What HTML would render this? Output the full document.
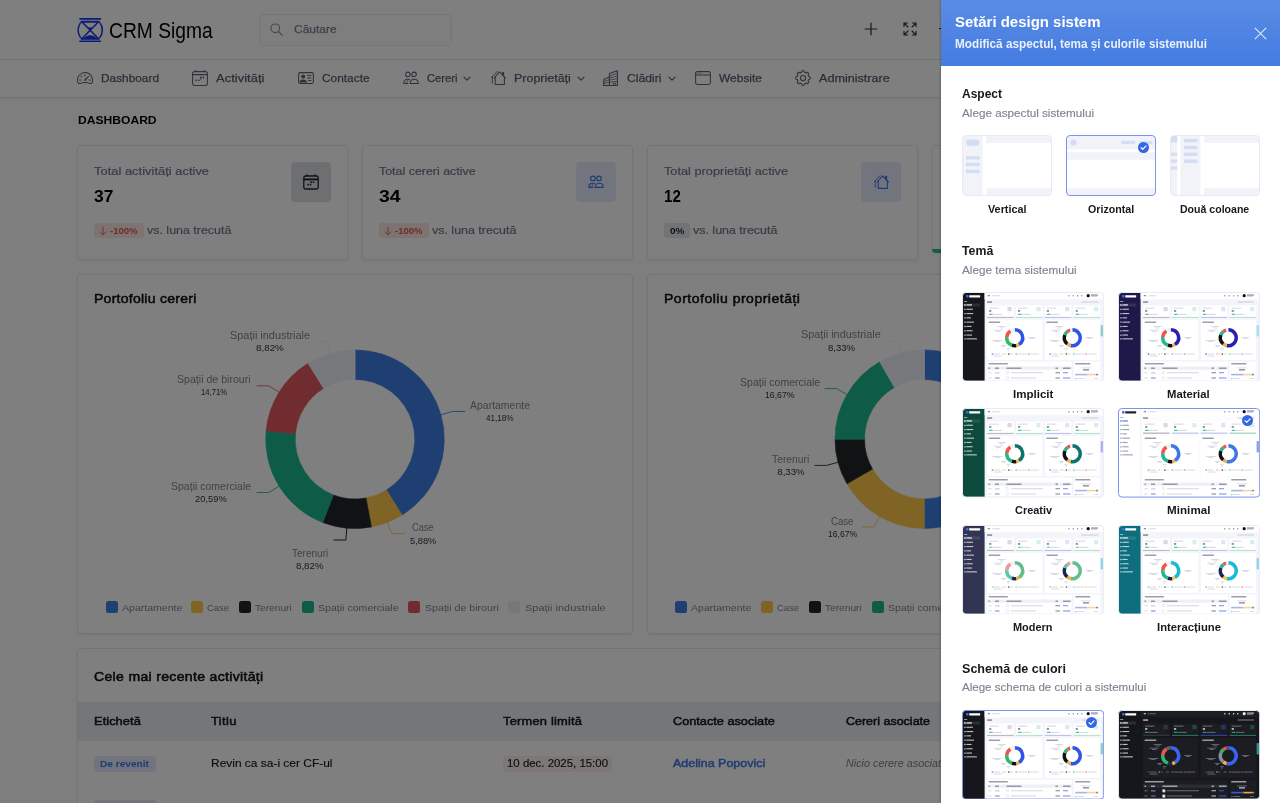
<!DOCTYPE html>
<html lang="ro"><head><meta charset="utf-8"><title>CRM Sigma - Dashboard</title><style>
*{box-sizing:border-box;margin:0;padding:0}
html,body{width:1280px;height:803px;overflow:hidden}
body{font-family:"Liberation Sans",sans-serif;background:#fdfdfe;position:relative}
.layer{position:absolute;left:0;top:0;width:1280px;height:803px;overflow:hidden;transform:translateZ(0);will-change:transform}
.t{position:absolute;white-space:nowrap;display:block}
.b{position:absolute;display:block}
#ov{background:rgba(0,0,0,.5)}
</style></head><body>
<div class="layer" id="pg">
<div class="b" style="left:0px;top:0px;width:1280px;height:59px;background:#fff;"></div>
<div class="b" style="left:0px;top:59px;width:1280px;height:1px;background:#e6e9ee;"></div>
<div class="b" style="left:0px;top:60px;width:1280px;height:37px;background:#fff;box-shadow:0 1px 2px rgba(56,65,74,.18);"></div>
<svg class="b" style="left:77px;top:17.2px;" width="26.4" height="26.4" viewBox="0 0 26.4 26.4"><g fill="none" stroke="#1a36ea" stroke-width="1.6" stroke-linecap="round"><path d="M2.9 1.85H23.5M2.900 24.250H23.500"/><path d="M3.4 5.9A12.2 12.2 0 0 0 3.400 20.200M23 5.900A12.200 12.200 0 0 1 23 20.200" stroke-width="1.500"/><path d="M4.6 4.7H21.8M4.600 21.700H21.800" stroke-width="2"/><path d="M4.800 4.700L21.600 21.700M21.600 4.700L4.800 21.700" stroke-width="1.600"/></g><path d="M6.8 21.600C8.500 19.200 10.800 18.300 13.200 18.300S17.900 19.200 19.600 21.600Z" fill="#1a36ea"/><path d="M11 10.400H15.400L13.200 12.800Z" fill="#1a36ea"/></svg>
<span class="t" style="left:108.8px;top:18.1px;font-size:22.6px;line-height:26px;color:#000;transform:scaleX(.852);transform-origin:0 0;">CRM Sigma</span>
<div class="b" style="left:259px;top:13.5px;width:192.5px;height:32px;background:#fdfdfe;border:1px solid #ebedf2;border-radius:4px;"></div>
<svg class="b" style="left:269.5px;top:23.3px;" width="13" height="13" viewBox="0 0 13 13"><g fill="none" stroke="#8a8fa0" stroke-width="1.1"><circle cx="5.3" cy="5.3" r="4.3"/><path d="M8.5 8.5L12.3 12.3" stroke-linecap="round"/></g></svg>
<span id="t1" class="t" style="left:294.20px;top:24.31px;font-size:11.8px;line-height:11.8px;color:#7c8090;-webkit-text-stroke:0.25px #7c8090;transform:scaleX(1.0147);transform-origin:0 0;">Căutare</span>
<svg class="b" style="left:864px;top:21.6px;" width="14" height="14" viewBox="0 0 14 14"><path d="M7 .8V13.2M.8 7H13.2" stroke="#2b2f38" stroke-width="1.2" fill="none"/></svg>
<svg class="b" style="left:902.7px;top:21.9px;" width="14" height="14" viewBox="0 0 14 14"><g fill="none" stroke="#2b2f38" stroke-width="1.1" stroke-linecap="round" stroke-linejoin="round"><path d="M1 4.6V1H4.6M1 1L5 5M9.4 1H13V4.6M13 1L9 5M13 9.4V13H9.4M13 13L9 9M4.6 13H1V9.4M1 13L5 9"/></g></svg>
<div class="b" style="left:938.6px;top:27.8px;width:3px;height:1.2px;background:#2b2f38;"></div>
<svg class="b" style="left:76.6px;top:70.4px;" width="16" height="16" viewBox="0 0 16 16"><g fill="#5e6477"><path d="M8 4a.5.5 0 0 1 .5.5V6a.5.5 0 0 1-1 0V4.500A.5.5 0 0 1 8 4zM3.732 5.732a.5.5 0 0 1 .707 0l.915.914a.5.5 0 1 1-.708.708l-.914-.915a.5.5 0 0 1 0-.707zM2 10a.5.5 0 0 1 .5-.5h1.586a.5.5 0 0 1 0 1H2.5A.5.5 0 0 1 2 10zm9.500 0a.5.5 0 0 1 .5-.5h1.500a.5.5 0 0 1 0 1H12a.5.5 0 0 1-.5-.5zm.754-4.246a.389.389 0 0 0-.527-.02L7.547 9.310a.91.91 0 1 0 1.302 1.258l3.434-4.297a.389.389 0 0 0-.029-.518z"/><path fill-rule="evenodd" d="M0 10a8 8 0 1 1 15.547 2.661c-.442 1.253-1.845 1.602-2.932 1.250C11.309 13.488 9.475 13 8 13c-1.474 0-3.310.488-4.615.911-1.087.352-2.490.003-2.932-1.250A7.988 7.988 0 0 1 0 10zm8-7a7 7 0 0 0-6.603 9.329c.203.575.923.876 1.680.630C4.397 12.533 6.358 12 8 12s3.604.532 4.923.960c.757.245 1.477-.056 1.680-.631A7 7 0 0 0 8 3z"/></g></svg>
<span id="t2" class="t" style="left:101.20px;top:72.83px;font-size:11.3px;line-height:11.3px;color:#565c6e;-webkit-text-stroke:0.25px #565c6e;transform:scaleX(1.0495);transform-origin:0 0;">Dashboard</span>
<svg class="b" style="left:191.8px;top:70.2px;" width="16" height="16" viewBox="0 0 16 16"><g fill="none" stroke="#5e6477" stroke-width="1.05" stroke-linecap="round" stroke-linejoin="round"><rect x=".6" y="1.6" width="14.8" height="13.8" rx="2"/><path d="M.6 4.6H15.4M3.6 .5V1.6M12.4 .5V1.6" /></g><g fill="#5e6477"><rect x="10.6" y="6.6" width="1.6" height="1.6" rx=".5"/><rect x="8" y="6.6" width="1.6" height="1.6" rx=".5"/><rect x="3.4" y="9.4" width="1.6" height="1.6" rx=".5"/><rect x="6" y="9.4" width="1.6" height="1.6" rx=".5"/><rect x="8.2" y="8.2" width="1.4" height="1.4" rx=".4"/></g></svg>
<span id="t3" class="t" style="left:216.20px;top:72.83px;font-size:11.3px;line-height:11.3px;color:#565c6e;-webkit-text-stroke:0.25px #565c6e;letter-spacing:0.044px;transform:scaleX(1.1400);transform-origin:0 0;">Activități</span>
<svg class="b" style="left:297.6px;top:70.4px;" width="16" height="16" viewBox="0 0 16 16"><g fill="none" stroke="#5e6477" stroke-width="1.05" stroke-linecap="round" stroke-linejoin="round"><rect x=".6" y="2.6" width="14.8" height="10.8" rx="1.6"/><path d="M9.5 5.5H13M9.5 8H13M10.5 10.5H13"/></g><g fill="#5e6477"><circle cx="5.2" cy="6.6" r="2"/><path d="M1.4 12.6C1.6 10.4 3 9.4 5.2 9.4S8.800 10.400 9 12.600Z"/></g></svg>
<span id="t4" class="t" style="left:321.80px;top:72.83px;font-size:11.3px;line-height:11.3px;color:#565c6e;-webkit-text-stroke:0.25px #565c6e;transform:scaleX(1.0527);transform-origin:0 0;">Contacte</span>
<svg class="b" style="left:402.6px;top:70.2px;" width="16" height="16" viewBox="0 0 16 16"><g fill="none" stroke="#5e6477" stroke-width="1.05" stroke-linecap="round" stroke-linejoin="round"><circle cx="4.9" cy="4.400" r="2.300"/><circle cx="11" cy="4.400" r="2.300"/><path d="M7.2 13.400C7.200 10.600 8.800 9.200 11.200 9.200S15.300 10.600 15.300 13.400Z"/><path d="M6.700 9.700C6.200 9.400 5.600 9.200 4.900 9.200C2.400 9.200 .8 10.600 .8 13.400H5"/><path d="M4.600 10.600L3.400 13.200" stroke-width=".8"/></g></svg>
<span id="t5" class="t" style="left:426.60px;top:72.83px;font-size:11.3px;line-height:11.3px;color:#565c6e;-webkit-text-stroke:0.25px #565c6e;transform:scaleX(0.9881);transform-origin:0 0;">Cereri</span>
<svg class="b" style="left:463.4px;top:75.6px;" width="8" height="6" viewBox="0 0 8 6"><path d="M1 1.200L4 4.200L7 1.200" fill="none" stroke="#5e6477" stroke-width="1.200" stroke-linecap="round" stroke-linejoin="round"/></svg>
<svg class="b" style="left:490px;top:70px;" width="16" height="16" viewBox="0 0 16 16"><g fill="none" stroke="#5e6477" stroke-width="1.05" stroke-linecap="round" stroke-linejoin="round"><path d="M4.200 8L9.400 1.800L15.400 8"/><path d="M5.200 7V14.400H14.400V7"/><path d="M12.400 4.800V2.400H13.600V6.200"/><path d="M7 1.600L1.400 7.800M2.300 6.900V13.400" stroke-width=".9"/></g></svg>
<span id="t6" class="t" style="left:514.00px;top:72.83px;font-size:11.3px;line-height:11.3px;color:#565c6e;-webkit-text-stroke:0.25px #565c6e;transform:scaleX(1.1029);transform-origin:0 0;">Proprietăți</span>
<svg class="b" style="left:576.6px;top:75.6px;" width="8" height="6" viewBox="0 0 8 6"><path d="M1 1.200L4 4.200L7 1.200" fill="none" stroke="#5e6477" stroke-width="1.200" stroke-linecap="round" stroke-linejoin="round"/></svg>
<svg class="b" style="left:603px;top:70px;" width="16" height="16" viewBox="0 0 16 16"><g fill="none" stroke="#5e6477" stroke-width="1.05" stroke-linecap="round" stroke-linejoin="round"><path d="M6.400 15.400V3.600L14.400 .8V15.400"/><path d="M.8 15.400V9.400L6.400 7"/><path d="M.8 15.400H14.400"/><path d="M6.400 5.800L14.400 3.400M6.400 8L14.400 6M6.400 10.200L14.400 8.600M6.400 12.400L14.400 11.200M.8 11.600L6.400 9.600M.8 13.600L6.400 12M10.400 15.400V13H12.400V15.400" stroke-width=".8"/></g></svg>
<span id="t7" class="t" style="left:627.40px;top:72.83px;font-size:11.3px;line-height:11.3px;color:#565c6e;-webkit-text-stroke:0.25px #565c6e;transform:scaleX(1.0745);transform-origin:0 0;">Clădiri</span>
<svg class="b" style="left:668.2px;top:75.6px;" width="8" height="6" viewBox="0 0 8 6"><path d="M1 1.200L4 4.200L7 1.200" fill="none" stroke="#5e6477" stroke-width="1.200" stroke-linecap="round" stroke-linejoin="round"/></svg>
<svg class="b" style="left:695px;top:70.2px;" width="16" height="16" viewBox="0 0 16 16"><g fill="none" stroke="#5e6477" stroke-width="1.05" stroke-linecap="round" stroke-linejoin="round"><rect x=".6" y="1.600" width="14.800" height="12.800" rx="1.800"/><path d="M.6 5H15.400"/></g><g fill="#5e6477"><circle cx="2.700" cy="3.300" r=".5"/><circle cx="4.300" cy="3.300" r=".5"/><circle cx="5.900" cy="3.300" r=".5"/></g></svg>
<span id="t8" class="t" style="left:719.00px;top:72.83px;font-size:11.3px;line-height:11.3px;color:#565c6e;-webkit-text-stroke:0.25px #565c6e;transform:scaleX(1.0589);transform-origin:0 0;">Website</span>
<svg class="b" style="left:794.6px;top:70.2px;" width="16" height="16" viewBox="0 0 16 16"><g fill="none" stroke="#5e6477" stroke-width="1.05" stroke-linecap="round" stroke-linejoin="round"><path d="M6.91 0.78L9.09 0.78L9.43 2.28L11.03 2.94L12.33 2.12L13.88 3.67L13.06 4.96L13.72 6.57L15.22 6.91L15.22 9.09L13.72 9.43L13.06 11.03L13.88 12.33L12.33 13.88L11.04 13.06L9.43 13.72L9.09 15.22L6.91 15.22L6.57 13.72L4.97 13.06L3.67 13.88L2.12 12.33L2.94 11.04L2.28 9.43L0.78 9.09L0.78 6.91L2.28 6.57L2.94 4.97L2.12 3.67L3.67 2.12L4.96 2.94L6.57 2.28Z"/><circle cx="8" cy="8" r="2.600"/></g></svg>
<span id="t9" class="t" style="left:818.60px;top:72.83px;font-size:11.3px;line-height:11.3px;color:#565c6e;-webkit-text-stroke:0.25px #565c6e;transform:scaleX(1.1148);transform-origin:0 0;">Administrare</span>
<span id="t10" class="t" style="left:77.70px;top:113.58px;font-size:11.6px;line-height:11.6px;color:#000;font-weight:700;transform:scaleX(1.0430);transform-origin:0 0;">DASHBOARD</span>
<div class="b" style="left:77px;top:145px;width:271px;height:115px;background:#fff;border:1px solid #e6e9ee;border-radius:4px;box-shadow:0 1px 2px rgba(56,65,74,.10);"></div>
<span id="t11" class="t" style="left:94.30px;top:165.63px;font-size:11.3px;line-height:11.3px;color:#71758a;-webkit-text-stroke:0.2px #71758a;letter-spacing:0.019px;transform:scaleX(1.1400);transform-origin:0 0;">Total activități active</span>
<span id="t12" class="t" style="left:94.30px;top:189.49px;font-size:15.6px;line-height:15.6px;color:#000;font-weight:700;transform:scaleX(1.1176);transform-origin:0 0;">37</span>
<div class="b" style="left:290.8px;top:162px;width:40px;height:40px;background:#dcdee2;border-radius:4px;"></div>
<svg class="b" style="left:302.8px;top:174px;" width="16" height="16" viewBox="0 0 16 16"><g fill="none" stroke="#212529" stroke-width="1.300"><rect x=".8" y="2" width="14.400" height="13" rx="1.800"/><path d="M.8 5.400H15.200" stroke-width="1.900"/><path d="M4 .4V2M12 .4V2" stroke-width="1.500"/></g><g fill="#212529"><rect x="9.800" y="7.400" width="1.600" height="1.600"/><rect x="7.400" y="7.400" width="1.600" height="1.600"/><rect x="4.400" y="9.800" width="1.600" height="1.600"/><rect x="6.800" y="9.800" width="1.600" height="1.600"/></g></svg>
<div class="b" style="left:94.3px;top:223.2px;width:50px;height:15.3px;background:#fbe6e3;border-radius:3px;"></div>
<svg class="b" style="left:99.1px;top:225.8px;" width="8" height="10" viewBox="0 0 8 10"><path d="M4 1V8.600M1.200 6L4 8.800L6.800 6" fill="none" stroke="#e2574c" stroke-width=".85" stroke-linecap="round" stroke-linejoin="round"/></svg>
<span id="t13" class="t" style="left:110.40px;top:226.17px;font-size:9.6px;line-height:9.6px;color:#e2574c;font-weight:700;transform:scaleX(0.9952);transform-origin:0 0;">-100%</span>
<span id="t14" class="t" style="left:146.60px;top:225.33px;font-size:11.3px;line-height:11.3px;color:#71758a;-webkit-text-stroke:0.2px #71758a;transform:scaleX(1.1017);transform-origin:0 0;">vs. luna trecută</span>
<div class="b" style="left:362px;top:145px;width:271px;height:115px;background:#fff;border:1px solid #e6e9ee;border-radius:4px;box-shadow:0 1px 2px rgba(56,65,74,.10);"></div>
<span id="t15" class="t" style="left:379.30px;top:165.63px;font-size:11.3px;line-height:11.3px;color:#71758a;-webkit-text-stroke:0.2px #71758a;transform:scaleX(1.0989);transform-origin:0 0;">Total cereri active</span>
<span id="t16" class="t" style="left:379.30px;top:189.49px;font-size:15.6px;line-height:15.6px;color:#000;font-weight:700;transform:scaleX(1.2443);transform-origin:0 0;">34</span>
<div class="b" style="left:575.8px;top:162px;width:40px;height:40px;background:#e5ebfb;border-radius:4px;"></div>
<svg class="b" style="left:587.8px;top:174px;" width="16" height="16" viewBox="0 0 16 16"><g fill="none" stroke="#3d78e3" stroke-width="1.100" stroke-linecap="round" stroke-linejoin="round"><circle cx="4.9" cy="4.400" r="2.300"/><circle cx="11" cy="4.400" r="2.300"/><path d="M7.2 13.400C7.200 10.600 8.800 9.200 11.200 9.200S15.300 10.600 15.300 13.400Z"/><path d="M6.700 9.700C6.200 9.400 5.600 9.200 4.900 9.200C2.400 9.200 .8 10.600 .8 13.400H5"/><path d="M4.600 10.600L3.400 13.200" stroke-width=".8"/></g></svg>
<div class="b" style="left:379.3px;top:223.2px;width:50px;height:15.3px;background:#fbe6e3;border-radius:3px;"></div>
<svg class="b" style="left:384.1px;top:225.8px;" width="8" height="10" viewBox="0 0 8 10"><path d="M4 1V8.600M1.200 6L4 8.800L6.800 6" fill="none" stroke="#e2574c" stroke-width=".85" stroke-linecap="round" stroke-linejoin="round"/></svg>
<span id="t17" class="t" style="left:395.40px;top:226.17px;font-size:9.6px;line-height:9.6px;color:#e2574c;font-weight:700;transform:scaleX(0.9952);transform-origin:0 0;">-100%</span>
<span id="t18" class="t" style="left:431.60px;top:225.33px;font-size:11.3px;line-height:11.3px;color:#71758a;-webkit-text-stroke:0.2px #71758a;transform:scaleX(1.1017);transform-origin:0 0;">vs. luna trecută</span>
<div class="b" style="left:647px;top:145px;width:271px;height:115px;background:#fff;border:1px solid #e6e9ee;border-radius:4px;box-shadow:0 1px 2px rgba(56,65,74,.10);"></div>
<span id="t19" class="t" style="left:664.30px;top:165.63px;font-size:11.3px;line-height:11.3px;color:#71758a;-webkit-text-stroke:0.2px #71758a;transform:scaleX(1.1284);transform-origin:0 0;">Total proprietăți active</span>
<span id="t20" class="t" style="left:664.30px;top:189.49px;font-size:15.6px;line-height:15.6px;color:#000;font-weight:700;transform:scaleX(0.9678);transform-origin:0 0;">12</span>
<div class="b" style="left:860.8px;top:162px;width:40px;height:40px;background:#e5ebfb;border-radius:4px;"></div>
<svg class="b" style="left:872.8px;top:174px;" width="16" height="16" viewBox="0 0 16 16"><g fill="none" stroke="#3d78e3" stroke-width="1.100" stroke-linecap="round" stroke-linejoin="round"><path d="M4.200 8L9.400 1.800L15.400 8"/><path d="M5.200 7V14.400H14.400V7"/><path d="M12.400 4.800V2.400H13.600V6.200"/><path d="M7 1.600L1.400 7.800M2.300 6.900V13.400" stroke-width=".9"/></g></svg>
<div class="b" style="left:664.3px;top:223.2px;width:25.6px;height:15.3px;background:#e4e6ea;border-radius:3px;"></div>
<span id="t21" class="t" style="left:669.80px;top:226.17px;font-size:9.6px;line-height:9.6px;color:#212529;font-weight:700;transform:scaleX(1.0378);transform-origin:0 0;">0%</span>
<span id="t22" class="t" style="left:693.00px;top:225.33px;font-size:11.3px;line-height:11.3px;color:#71758a;-webkit-text-stroke:0.2px #71758a;transform:scaleX(1.1017);transform-origin:0 0;">vs. luna trecută</span>
<div class="b" style="left:932px;top:145px;width:271px;height:108px;background:#fff;border:1px solid #e6e9ee;border-radius:4px;box-shadow:0 1px 2px rgba(56,65,74,.10);"></div>
<div class="b" style="left:932px;top:249.4px;width:271px;height:3.6px;background:#21bd93;border-radius:0 0 4px 4px;"></div>
<div class="b" style="left:77px;top:274px;width:556px;height:359.5px;background:#fff;border:1px solid #e6e9ee;border-radius:4px;box-shadow:0 1px 2px rgba(56,65,74,.10);"></div>
<span id="t23" class="t" style="left:94.30px;top:292.99px;font-size:12.3px;line-height:12.3px;color:#111;-webkit-text-stroke:0.5px #111;letter-spacing:0.226px;transform:scaleX(1.1400);transform-origin:0 0;">Portofoliu cereri</span>
<svg class="b" style="left:0;top:0" width="1280" height="803" viewBox="0 0 1280 803"><path d="M440.89 414.76L452.43 411.48H465.40" fill="none" stroke="#3f7de2" stroke-width="1" stroke-opacity=".85"/><path d="M387.26 522.47L391.59 533.66H405.00" fill="none" stroke="#ffc84b" stroke-width="1" stroke-opacity=".85"/><path d="M279.08 486.21L268.87 492.53H256.60" fill="none" stroke="#1cb88f" stroke-width="1" stroke-opacity=".85"/><path d="M279.08 392.19L268.87 385.87H256.60" fill="none" stroke="#e0595e" stroke-width="1" stroke-opacity=".85"/><path d="M330.56 353.31L327.28 341.77H315.00" fill="none" stroke="#eef1f6" stroke-width="1" stroke-opacity=".85"/><path d="M355.00 349.90A89.3 89.3 0 0 1 402.01 515.12L386.48 490.04A59.8 59.8 0 0 0 355.00 379.40Z" fill="#3f7de2" stroke="#3f7de2" stroke-width=".6"/><path d="M402.01 515.12A89.3 89.3 0 0 1 371.41 526.98L365.99 497.98A59.8 59.8 0 0 0 386.48 490.04Z" fill="#ffc84b" stroke="#ffc84b" stroke-width=".6"/><path d="M371.41 526.98A89.3 89.3 0 0 1 322.74 522.47L333.40 494.96A59.8 59.8 0 0 0 365.99 497.98Z" fill="#212529" stroke="#212529" stroke-width=".6"/><path d="M322.74 522.47A89.3 89.3 0 0 1 266.08 430.96L295.46 433.68A59.8 59.8 0 0 0 333.40 494.96Z" fill="#1cb88f" stroke="#1cb88f" stroke-width=".6"/><path d="M266.08 430.96A89.3 89.3 0 0 1 307.99 363.28L323.52 388.36A59.8 59.8 0 0 0 295.46 433.68Z" fill="#e0595e" stroke="#e0595e" stroke-width=".6"/><path d="M307.99 363.28A89.3 89.3 0 0 1 355.00 349.90L355.00 379.40A59.8 59.8 0 0 0 323.52 388.36Z" fill="#eef1f6" stroke="#eef1f6" stroke-width=".6"/><path d="M354.70 349.40V379.90" stroke="#fff" stroke-width="1"/></svg>
<span id="t24" class="t" style="left:229.90px;top:330.64px;font-size:10px;line-height:10px;color:#80848f;transform:scaleX(1.0917);transform-origin:0 0;">Spații industriale</span>
<span id="t25" class="t" style="left:256.00px;top:343.17px;font-size:9.6px;line-height:9.6px;color:#30343c;transform:scaleX(1.0219);transform-origin:0 0;">8,82%</span>
<span id="t26" class="t" style="left:177.40px;top:374.84px;font-size:10px;line-height:10px;color:#80848f;transform:scaleX(1.0592);transform-origin:0 0;">Spații de birouri</span>
<span id="t27" class="t" style="left:200.90px;top:387.27px;font-size:9.6px;line-height:9.6px;color:#30343c;transform:scaleX(0.8019);transform-origin:0 0;">14,71%</span>
<span id="t28" class="t" style="left:470.00px;top:400.64px;font-size:10px;line-height:10px;color:#80848f;transform:scaleX(1.0477);transform-origin:0 0;">Apartamente</span>
<span id="t29" class="t" style="left:485.70px;top:412.77px;font-size:9.6px;line-height:9.6px;color:#30343c;transform:scaleX(0.8480);transform-origin:0 0;">41,18%</span>
<span id="t30" class="t" style="left:170.90px;top:481.64px;font-size:10px;line-height:10px;color:#80848f;transform:scaleX(1.0518);transform-origin:0 0;">Spații comerciale</span>
<span id="t31" class="t" style="left:195.30px;top:494.27px;font-size:9.6px;line-height:9.6px;color:#30343c;transform:scaleX(0.9740);transform-origin:0 0;">20,59%</span>
<span id="t32" class="t" style="left:411.50px;top:523.24px;font-size:10px;line-height:10px;color:#80848f;transform:scaleX(0.9204);transform-origin:0 0;">Case</span>
<span id="t33" class="t" style="left:409.60px;top:535.77px;font-size:9.6px;line-height:9.6px;color:#30343c;transform:scaleX(0.9705);transform-origin:0 0;">5,88%</span>
<span id="t34" class="t" style="left:291.70px;top:548.63px;font-size:10px;line-height:10px;color:#80848f;transform:scaleX(1.0044);transform-origin:0 0;">Terenuri</span>
<span id="t35" class="t" style="left:296.00px;top:561.17px;font-size:9.6px;line-height:9.6px;color:#30343c;transform:scaleX(1.0109);transform-origin:0 0;">8,82%</span>
<div class="b" style="left:105.5px;top:600.8px;width:12px;height:12px;background:#3f7de2;border-radius:2.5px;"></div>
<span id="t36" class="t" style="left:121.60px;top:602.70px;font-size:9.8px;line-height:9.8px;color:#80848f;transform:scaleX(1.0768);transform-origin:0 0;">Apartamente</span>
<div class="b" style="left:190.7px;top:600.8px;width:12px;height:12px;background:#ffc84b;border-radius:2.5px;"></div>
<span id="t37" class="t" style="left:207.30px;top:602.70px;font-size:9.8px;line-height:9.8px;color:#80848f;transform:scaleX(0.9661);transform-origin:0 0;">Case</span>
<div class="b" style="left:238.7px;top:600.8px;width:12px;height:12px;background:#212529;border-radius:2.5px;"></div>
<span id="t38" class="t" style="left:255.30px;top:602.70px;font-size:9.8px;line-height:9.8px;color:#80848f;transform:scaleX(1.0365);transform-origin:0 0;">Terenuri</span>
<div class="b" style="left:301.8px;top:600.8px;width:12px;height:12px;background:#1cb88f;border-radius:2.5px;"></div>
<span id="t39" class="t" style="left:318.40px;top:602.70px;font-size:9.8px;line-height:9.8px;color:#80848f;transform:scaleX(1.0803);transform-origin:0 0;">Spații comerciale</span>
<div class="b" style="left:407.8px;top:600.8px;width:12px;height:12px;background:#e0595e;border-radius:2.5px;"></div>
<span id="t40" class="t" style="left:424.80px;top:602.70px;font-size:9.8px;line-height:9.8px;color:#80848f;transform:scaleX(1.0840);transform-origin:0 0;">Spații de birouri</span>
<div class="b" style="left:507.8px;top:600.8px;width:12px;height:12px;background:#eef1f6;border-radius:2.5px;"></div>
<span id="t41" class="t" style="left:524.80px;top:602.70px;font-size:9.8px;line-height:9.8px;color:#80848f;transform:scaleX(1.1225);transform-origin:0 0;">Spații industriale</span>
<svg class="b" style="left:0;top:0" width="1280" height="803"><path d="M346.9 526.6L345.9 540H333.6" fill="none" stroke="#212529" stroke-width="1"/></svg>
<div class="b" style="left:647px;top:274px;width:556px;height:359.5px;background:#fff;border:1px solid #e6e9ee;border-radius:4px;box-shadow:0 1px 2px rgba(56,65,74,.10);"></div>
<span id="t42" class="t" style="left:664.30px;top:292.99px;font-size:12.3px;line-height:12.3px;color:#111;-webkit-text-stroke:0.5px #111;letter-spacing:0.440px;transform:scaleX(1.1400);transform-origin:0 0;">Portofoliu proprietăți</span>
<svg class="b" style="left:0;top:0" width="1280" height="803" viewBox="0 0 1280 803"><path d="M1013.60 439.20L1025.60 439.20H1040.00" fill="none" stroke="#3f7de2" stroke-width="1" stroke-opacity=".85"/><path d="M879.65 516.54L873.65 526.93H861.60" fill="none" stroke="#ffc84b" stroke-width="1" stroke-opacity=".85"/><path d="M838.04 462.31L826.45 465.42H814.60" fill="none" stroke="#212529" stroke-width="1" stroke-opacity=".85"/><path d="M846.96 394.55L836.57 388.55H824.70" fill="none" stroke="#1cb88f" stroke-width="1" stroke-opacity=".85"/><path d="M901.19 352.94L898.08 341.35H886.00" fill="none" stroke="#eef1f6" stroke-width="1" stroke-opacity=".85"/><path d="M924.30 349.90A89.3 89.3 0 0 1 924.30 528.50L924.30 499.00A59.8 59.8 0 0 0 924.30 379.40Z" fill="#3f7de2" stroke="#3f7de2" stroke-width=".6"/><path d="M924.30 528.50A89.3 89.3 0 0 1 846.96 483.85L872.51 469.10A59.8 59.8 0 0 0 924.30 499.00Z" fill="#ffc84b" stroke="#ffc84b" stroke-width=".6"/><path d="M846.96 483.85A89.3 89.3 0 0 1 835.00 439.20L864.50 439.20A59.8 59.8 0 0 0 872.51 469.10Z" fill="#212529" stroke="#212529" stroke-width=".6"/><path d="M835.00 439.20A89.3 89.3 0 0 1 879.65 361.86L894.40 387.41A59.8 59.8 0 0 0 864.50 439.20Z" fill="#1cb88f" stroke="#1cb88f" stroke-width=".6"/><path d="M879.65 361.86A89.3 89.3 0 0 1 924.30 349.90L924.30 379.40A59.8 59.8 0 0 0 894.40 387.41Z" fill="#eef1f6" stroke="#eef1f6" stroke-width=".6"/><path d="M924.00 349.40V379.90" stroke="#fff" stroke-width="1"/></svg>
<span id="t43" class="t" style="left:801.30px;top:330.14px;font-size:10px;line-height:10px;color:#80848f;transform:scaleX(1.0862);transform-origin:0 0;">Spații industriale</span>
<span id="t44" class="t" style="left:827.60px;top:342.67px;font-size:9.6px;line-height:9.6px;color:#30343c;transform:scaleX(0.9962);transform-origin:0 0;">8,33%</span>
<span id="t45" class="t" style="left:739.50px;top:377.64px;font-size:10px;line-height:10px;color:#80848f;transform:scaleX(1.0531);transform-origin:0 0;">Spații comerciale</span>
<span id="t46" class="t" style="left:764.90px;top:390.17px;font-size:9.6px;line-height:9.6px;color:#30343c;transform:scaleX(0.9064);transform-origin:0 0;">16,67%</span>
<span id="t47" class="t" style="left:772.30px;top:454.64px;font-size:10px;line-height:10px;color:#80848f;transform:scaleX(1.0321);transform-origin:0 0;">Terenuri</span>
<span id="t48" class="t" style="left:777.30px;top:467.07px;font-size:9.6px;line-height:9.6px;color:#30343c;">8,33%</span>
<span id="t49" class="t" style="left:831.00px;top:516.84px;font-size:10px;line-height:10px;color:#80848f;transform:scaleX(0.9589);transform-origin:0 0;">Case</span>
<span id="t50" class="t" style="left:827.60px;top:528.87px;font-size:9.6px;line-height:9.6px;color:#30343c;transform:scaleX(0.8910);transform-origin:0 0;">16,67%</span>
<span id="t51" class="t" style="left:1040.00px;top:428.64px;font-size:10px;line-height:10px;color:#80848f;transform:scaleX(1.0477);transform-origin:0 0;">Apartamente</span>
<span id="t52" class="t" style="left:1055.00px;top:441.27px;font-size:9.6px;line-height:9.6px;color:#30343c;transform:scaleX(0.9217);transform-origin:0 0;">50,00%</span>
<div class="b" style="left:675.3px;top:600.8px;width:12px;height:12px;background:#3f7de2;border-radius:2.5px;"></div>
<span id="t53" class="t" style="left:691.40px;top:602.70px;font-size:9.8px;line-height:9.8px;color:#80848f;transform:scaleX(1.0768);transform-origin:0 0;">Apartamente</span>
<div class="b" style="left:760.5px;top:600.8px;width:12px;height:12px;background:#ffc84b;border-radius:2.5px;"></div>
<span id="t54" class="t" style="left:777.10px;top:602.70px;font-size:9.8px;line-height:9.8px;color:#80848f;transform:scaleX(0.9661);transform-origin:0 0;">Case</span>
<div class="b" style="left:808.5px;top:600.8px;width:12px;height:12px;background:#212529;border-radius:2.5px;"></div>
<span id="t55" class="t" style="left:825.10px;top:602.70px;font-size:9.8px;line-height:9.8px;color:#80848f;transform:scaleX(1.0365);transform-origin:0 0;">Terenuri</span>
<div class="b" style="left:871.6px;top:600.8px;width:12px;height:12px;background:#1cb88f;border-radius:2.5px;"></div>
<span id="t56" class="t" style="left:888.20px;top:602.70px;font-size:9.8px;line-height:9.8px;color:#80848f;transform:scaleX(1.0803);transform-origin:0 0;">Spații comerciale</span>
<div class="b" style="left:977.6px;top:600.8px;width:12px;height:12px;background:#e0595e;border-radius:2.5px;"></div>
<span id="t57" class="t" style="left:994.60px;top:602.70px;font-size:9.8px;line-height:9.8px;color:#80848f;transform:scaleX(1.0840);transform-origin:0 0;">Spații de birouri</span>
<div class="b" style="left:1077.6px;top:600.8px;width:12px;height:12px;background:#eef1f6;border-radius:2.5px;"></div>
<span id="t58" class="t" style="left:1094.60px;top:602.70px;font-size:9.8px;line-height:9.8px;color:#80848f;transform:scaleX(1.1225);transform-origin:0 0;">Spații industriale</span>
<div class="b" style="left:77px;top:648px;width:1126px;height:200px;background:#fff;border:1px solid #e6e9ee;border-radius:4px;box-shadow:0 1px 2px rgba(56,65,74,.10);"></div>
<span id="t59" class="t" style="left:93.80px;top:670.59px;font-size:12.3px;line-height:12.3px;color:#111;-webkit-text-stroke:0.5px #111;letter-spacing:0.293px;transform:scaleX(1.1400);transform-origin:0 0;">Cele mai recente activități</span>
<div class="b" style="left:78px;top:702px;width:1124px;height:39.3px;background:#e9ecf3;"></div>
<span id="t60" class="t" style="left:93.80px;top:716.03px;font-size:11.3px;line-height:11.3px;color:#16191d;-webkit-text-stroke:0.5px #16191d;letter-spacing:0.032px;transform:scaleX(1.1400);transform-origin:0 0;">Etichetă</span>
<span id="t61" class="t" style="left:210.50px;top:716.03px;font-size:11.3px;line-height:11.3px;color:#16191d;-webkit-text-stroke:0.5px #16191d;letter-spacing:0.358px;transform:scaleX(1.1400);transform-origin:0 0;">Titlu</span>
<span id="t62" class="t" style="left:503.00px;top:716.03px;font-size:11.3px;line-height:11.3px;color:#16191d;-webkit-text-stroke:0.5px #16191d;letter-spacing:0.177px;transform:scaleX(1.1400);transform-origin:0 0;">Termen limită</span>
<span id="t63" class="t" style="left:673.20px;top:716.03px;font-size:11.3px;line-height:11.3px;color:#16191d;-webkit-text-stroke:0.5px #16191d;transform:scaleX(1.1256);transform-origin:0 0;">Contacte asociate</span>
<span id="t64" class="t" style="left:845.50px;top:716.03px;font-size:11.3px;line-height:11.3px;color:#16191d;-webkit-text-stroke:0.5px #16191d;transform:scaleX(1.1055);transform-origin:0 0;">Cereri asociate</span>
<div class="b" style="left:93.8px;top:756px;width:62.4px;height:16px;background:#e2e9fb;border-radius:3px;"></div>
<span id="t65" class="t" style="left:100.40px;top:759.17px;font-size:9.6px;line-height:9.6px;color:#3d78e3;font-weight:700;transform:scaleX(1.0562);transform-origin:0 0;">De revenit</span>
<span id="t66" class="t" style="left:210.50px;top:758.43px;font-size:11.3px;line-height:11.3px;color:#16191d;-webkit-text-stroke:0.15px #16191d;transform:scaleX(1.0575);transform-origin:0 0;">Revin ca sa-i cer CF-ul</span>
<div class="b" style="left:503px;top:755.5px;width:108.5px;height:16.5px;background:#fbeeec;border-radius:3px;"></div>
<span id="t67" class="t" style="left:506.50px;top:758.43px;font-size:11.3px;line-height:11.3px;color:#16191d;-webkit-text-stroke:0.15px #16191d;transform:scaleX(1.0113);transform-origin:0 0;">10 dec. 2025, 15:00</span>
<span id="t68" class="t" style="left:673.20px;top:758.43px;font-size:11.3px;line-height:11.3px;color:#3d78e3;-webkit-text-stroke:0.45px #3d78e3;transform:scaleX(1.1038);transform-origin:0 0;">Adelina Popovici</span>
<span id="t69" class="t" style="left:845.50px;top:758.27px;font-size:11.5px;line-height:11.5px;color:#7d8190;font-style:italic;transform:scaleX(0.9405);transform-origin:0 0;">Nicio cerere asociată</span>
<div class="b" style="left:93.8px;top:800px;width:62.4px;height:16px;background:#e2e9fb;border-radius:3px;"></div>
</div>
<div class="layer" id="ov"></div>
<div class="layer" id="pn">
<div class="b" style="left:941px;top:0px;width:340px;height:803px;background:#fff;box-shadow:-1px 0 1.5px rgba(0,0,0,.2);"></div>
<div class="b" style="left:941px;top:0px;width:340px;height:65.7px;background:#3f79e0;background-image:linear-gradient(180deg,rgba(255,255,255,.14),rgba(255,255,255,.02));"></div>
<span id="t70" class="t" style="left:955.00px;top:14.38px;font-size:15.5px;line-height:15.5px;color:#fff;font-weight:700;transform:scaleX(0.9651);transform-origin:0 0;">Setări design sistem</span>
<span id="t71" class="t" style="left:955.00px;top:37.57px;font-size:12.2px;line-height:12.2px;color:#e9f0fd;font-weight:700;transform:scaleX(0.9639);transform-origin:0 0;">Modifică aspectul, tema și culorile sistemului</span>
<svg class="b" style="left:1254.3px;top:26.6px;" width="13" height="13" viewBox="0 0 13 13"><path d="M.8 .8L12.2 12.2M12.200 .8L.8 12.200" stroke="#fff" stroke-opacity=".82" stroke-width="1.1" fill="none"/></svg>
<span id="t72" class="t" style="left:962.00px;top:88.47px;font-size:12.2px;line-height:12.2px;color:#16191d;font-weight:700;transform:scaleX(0.9842);transform-origin:0 0;">Aspect</span>
<span id="t73" class="t" style="left:962.00px;top:107.95px;font-size:11.4px;line-height:11.4px;color:#7f8392;-webkit-text-stroke:0.15px #7f8392;transform:scaleX(1.0270);transform-origin:0 0;">Alege aspectul sistemului</span>
<span id="t74" class="t" style="left:962.00px;top:245.07px;font-size:12.2px;line-height:12.2px;color:#16191d;font-weight:700;transform:scaleX(1.0117);transform-origin:0 0;">Temă</span>
<span id="t75" class="t" style="left:962.00px;top:264.55px;font-size:11.4px;line-height:11.4px;color:#7f8392;-webkit-text-stroke:0.15px #7f8392;transform:scaleX(1.0275);transform-origin:0 0;">Alege tema sistemului</span>
<span id="t76" class="t" style="left:962.00px;top:662.77px;font-size:12.2px;line-height:12.2px;color:#16191d;font-weight:700;transform:scaleX(1.0305);transform-origin:0 0;">Schemă de culori</span>
<span id="t77" class="t" style="left:962.00px;top:682.25px;font-size:11.4px;line-height:11.4px;color:#7f8392;-webkit-text-stroke:0.15px #7f8392;transform:scaleX(1.0137);transform-origin:0 0;">Alege schema de culori a sistemului</span>
<svg class="b" style="left:962px;top:135px;" width="90" height="61" viewBox="0 0 90 61"><defs><clipPath id="lcv"><rect x=".5" y=".5" width="89" height="60" rx="3.500"/></clipPath></defs><g clip-path="url(#lcv)"><rect x="1.00" y="1.00" width="19.60" height="59.00" fill="#f1f3f9"/><rect x="4.00" y="4.50" width="13.40" height="6.20" fill="#d3ddf4" rx="3.1"/><rect x="4.00" y="21.20" width="13.60" height="3.30" fill="#d3ddf4"/><rect x="4.00" y="27.80" width="13.60" height="3.30" fill="#d3ddf4"/><rect x="4.00" y="34.70" width="13.60" height="3.30" fill="#d3ddf4"/><rect x="24.20" y="1.00" width="64.80" height="7.00" fill="#f1f3f9"/><rect x="24.20" y="53.20" width="64.80" height="6.80" fill="#f1f3f9"/></g><rect x=".5" y=".5" width="89" height="60" rx="3.500" fill="none" stroke="#e8ebf6"/></svg>
<svg class="b" style="left:1066px;top:135px;" width="90" height="61" viewBox="0 0 90 61"><defs><clipPath id="lch"><rect x=".5" y=".5" width="89" height="60" rx="3.500"/></clipPath></defs><g clip-path="url(#lch)"><rect x="1.00" y="1.00" width="88.00" height="13.40" fill="#f1f3f9"/><circle cx="7.4" cy="7.500" r="3.100" fill="#d3ddf4"/><rect x="55.50" y="5.80" width="13.60" height="3.10" fill="#d3ddf4"/><rect x="73.20" y="5.80" width="13.20" height="3.10" fill="#d3ddf4"/><rect x="1.00" y="17.30" width="88.00" height="7.40" fill="#f1f3f9"/><rect x="1.00" y="53.20" width="88.00" height="6.80" fill="#f1f3f9"/></g><rect x=".5" y=".5" width="89" height="60" rx="3.500" fill="none" stroke="#7d93ee"/></svg>
<svg class="b" style="left:1169.6px;top:135px;" width="90" height="61" viewBox="0 0 90 61"><defs><clipPath id="lcc"><rect x=".5" y=".5" width="89" height="60" rx="3.500"/></clipPath></defs><g clip-path="url(#lcc)"><rect x="1.00" y="1.00" width="6.20" height="59.00" fill="#f1f3f9"/><rect x="1.00" y="1.00" width="6.20" height="6.40" fill="#d3ddf4"/><rect x="1.00" y="17.60" width="6.20" height="3.30" fill="#d3ddf4"/><rect x="1.00" y="24.50" width="6.20" height="3.30" fill="#d3ddf4"/><rect x="1.00" y="31.40" width="6.20" height="3.30" fill="#d3ddf4"/><rect x="10.40" y="1.00" width="20.00" height="59.00" fill="#f1f3f9"/><rect x="14.00" y="3.90" width="13.50" height="3.40" fill="#d3ddf4"/><rect x="14.00" y="10.80" width="13.50" height="3.40" fill="#d3ddf4"/><rect x="14.00" y="17.60" width="13.50" height="3.40" fill="#d3ddf4"/><rect x="14.00" y="24.50" width="13.50" height="3.40" fill="#d3ddf4"/><rect x="33.80" y="1.00" width="55.20" height="7.00" fill="#f1f3f9"/><rect x="33.80" y="53.20" width="55.20" height="6.80" fill="#f1f3f9"/></g><rect x=".5" y=".5" width="89" height="60" rx="3.500" fill="none" stroke="#e8ebf6"/></svg>
<svg class="b" style="left:1137.7px;top:142px;" width="11" height="11" viewBox="0 0 12 12"><circle cx="6" cy="6" r="6" fill="#3266e3"/><path d="M3.300 6.200L5.200 8L8.800 4.300" fill="none" stroke="#fff" stroke-width="1.300" stroke-linecap="round" stroke-linejoin="round"/></svg>
<span id="t78" class="t" style="left:987.50px;top:204.87px;font-size:10.2px;line-height:10.2px;color:#16191d;font-weight:700;transform:scaleX(1.0621);transform-origin:0 0;">Vertical</span>
<span id="t79" class="t" style="left:1087.60px;top:204.87px;font-size:10.2px;line-height:10.2px;color:#16191d;font-weight:700;transform:scaleX(1.0463);transform-origin:0 0;">Orizontal</span>
<span id="t80" class="t" style="left:1180.10px;top:204.87px;font-size:10.2px;line-height:10.2px;color:#16191d;font-weight:700;transform:scaleX(1.0360);transform-origin:0 0;">Două coloane</span>
<svg class="b" style="left:962.2px;top:291.5px;" width="142.2" height="89.6" viewBox="0 0 142.2 89.6"><defs><clipPath id="tc1"><rect x=".5" y=".5" width="141.2" height="88.6" rx="3.500"/></clipPath></defs><g clip-path="url(#tc1)"><rect x="0.00" y="0.00" width="142.20" height="89.60" fill="#f4f5fa"/><rect x="0.00" y="0.00" width="22.60" height="89.60" fill="#15171c"/><rect x="4.20" y="3.00" width="2.20" height="2.60" fill="#3f6df0" rx="0.6"/><rect x="7.20" y="3.20" width="11.00" height="2.20" fill="#fff" rx="0.4"/><rect x="2.20" y="9.00" width="3.00" height="0.80" fill="rgba(255,255,255,.72)"/><rect x="2.20" y="12.35" width="1.50" height="1.30" fill="#fff" rx="0.3"/><rect x="4.40" y="12.40" width="5.50" height="1.10" fill="#fff"/><rect x="2.20" y="16.65" width="1.50" height="1.30" fill="rgba(255,255,255,.72)" rx="0.3"/><rect x="4.40" y="16.70" width="6.50" height="1.10" fill="rgba(255,255,255,.72)"/><rect x="2.20" y="20.95" width="1.50" height="1.30" fill="rgba(255,255,255,.72)" rx="0.3"/><rect x="4.40" y="21.00" width="6.80" height="1.10" fill="rgba(255,255,255,.72)"/><rect x="2.20" y="25.25" width="1.50" height="1.30" fill="rgba(255,255,255,.72)" rx="0.3"/><rect x="4.40" y="25.30" width="4.60" height="1.10" fill="rgba(255,255,255,.72)"/><rect x="2.20" y="29.55" width="1.50" height="1.30" fill="rgba(255,255,255,.72)" rx="0.3"/><rect x="4.40" y="29.60" width="7.60" height="1.10" fill="rgba(255,255,255,.72)"/><rect x="2.20" y="33.85" width="1.50" height="1.30" fill="rgba(255,255,255,.72)" rx="0.3"/><rect x="4.40" y="33.90" width="5.20" height="1.10" fill="rgba(255,255,255,.72)"/><rect x="2.20" y="38.15" width="1.50" height="1.30" fill="rgba(255,255,255,.72)" rx="0.3"/><rect x="4.40" y="38.20" width="6.20" height="1.10" fill="rgba(255,255,255,.72)"/><rect x="2.20" y="42.45" width="1.50" height="1.30" fill="rgba(255,255,255,.72)" rx="0.3"/><rect x="4.40" y="42.50" width="5.60" height="1.10" fill="rgba(255,255,255,.72)"/><rect x="2.20" y="46.25" width="1.50" height="1.30" fill="rgba(255,255,255,.72)" rx="0.3"/><rect x="4.40" y="46.30" width="10.50" height="1.10" fill="rgba(255,255,255,.72)"/><rect x="1.20" y="11.50" width="17.00" height="2.90" fill="rgba(255,255,255,.10)" rx="0.6"/><rect x="22.60" y="0.00" width="119.60" height="7.20" fill="#fff"/><rect x="25.80" y="3.30" width="2.20" height="0.90" fill="#5b6070"/><rect x="30.00" y="3.30" width="1.00" height="1.00" fill="#c9ccd6"/><rect x="31.80" y="3.40" width="6.00" height="0.80" fill="#c9ccd6"/><rect x="106.20" y="3.10" width="1.30" height="1.30" fill="#8b90a0" rx="0.4"/><rect x="110.60" y="3.10" width="1.30" height="1.30" fill="#8b90a0" rx="0.4"/><rect x="115.00" y="3.10" width="1.30" height="1.30" fill="#8b90a0" rx="0.4"/><rect x="119.20" y="3.10" width="1.30" height="1.30" fill="#8b90a0" rx="0.4"/><circle cx="126.2" cy="3.700" r="1.600" fill="#111"/><rect x="129.00" y="2.60" width="7.00" height="0.90" fill="#5b6070"/><rect x="129.00" y="4.20" width="6.00" height="0.80" fill="#c9ccd6"/><rect x="25.10" y="9.50" width="5.00" height="1.10" fill="#5b6070"/><rect x="119.60" y="9.50" width="16.50" height="1.00" fill="#c9ccd6"/><rect x="25.10" y="13.60" width="26.60" height="12.20" fill="#fff" rx="0.6"/><rect x="25.10" y="24.90" width="26.60" height="0.90" fill="#a9abb2"/><rect x="27.10" y="15.70" width="9.50" height="0.80" fill="#c9ccd6"/><rect x="27.10" y="18.30" width="2.20" height="1.30" fill="#5b6070"/><rect x="27.10" y="21.80" width="3.60" height="1.00" fill="#2dba6e"/><rect x="31.30" y="21.90" width="8.50" height="0.80" fill="#c9ccd6"/><rect x="45.50" y="15.00" width="4.20" height="4.20" fill="#d9dade" rx="0.5"/><rect x="54.00" y="13.60" width="26.60" height="12.20" fill="#fff" rx="0.6"/><rect x="54.00" y="24.90" width="26.60" height="0.90" fill="#a6dcc4"/><rect x="56.00" y="15.70" width="9.50" height="0.80" fill="#c9ccd6"/><rect x="56.00" y="18.30" width="2.20" height="1.30" fill="#5b6070"/><rect x="56.00" y="21.80" width="3.60" height="1.00" fill="#2dba6e"/><rect x="60.20" y="21.90" width="8.50" height="0.80" fill="#c9ccd6"/><rect x="74.40" y="15.00" width="4.20" height="4.20" fill="#d6f0e4" rx="0.5"/><rect x="82.80" y="13.60" width="26.60" height="12.20" fill="#fff" rx="0.6"/><rect x="82.80" y="24.90" width="26.60" height="0.90" fill="#a9b3ee"/><rect x="84.80" y="15.70" width="9.50" height="0.80" fill="#c9ccd6"/><rect x="84.80" y="18.30" width="2.20" height="1.30" fill="#5b6070"/><rect x="84.80" y="21.80" width="3.60" height="1.00" fill="#2dba6e"/><rect x="89.00" y="21.90" width="8.50" height="0.80" fill="#c9ccd6"/><rect x="103.20" y="15.00" width="4.20" height="4.20" fill="#dfe3fb" rx="0.5"/><rect x="111.70" y="13.60" width="26.60" height="12.20" fill="#fff" rx="0.6"/><rect x="111.70" y="24.90" width="26.60" height="0.90" fill="#a6dcc4"/><rect x="113.70" y="15.70" width="9.50" height="0.80" fill="#c9ccd6"/><rect x="113.70" y="18.30" width="2.20" height="1.30" fill="#5b6070"/><rect x="113.70" y="21.80" width="3.60" height="1.00" fill="#2dba6e"/><rect x="117.90" y="21.90" width="8.50" height="0.80" fill="#c9ccd6"/><rect x="132.10" y="15.00" width="4.20" height="4.20" fill="#d6f0e4" rx="0.5"/><rect x="25.10" y="27.70" width="55.20" height="40.30" fill="#fff" rx="0.6"/><rect x="26.70" y="29.70" width="11.50" height="0.90" fill="#5b6070"/><rect x="35.70" y="34.30" width="8.00" height="0.70" fill="#c9ccd6"/><rect x="37.70" y="35.60" width="4.00" height="0.70" fill="#c9ccd6"/><rect x="31.70" y="37.80" width="9.00" height="0.70" fill="#c9ccd6"/><rect x="33.95" y="39.10" width="4.50" height="0.70" fill="#c9ccd6"/><rect x="30.20" y="48.00" width="10.00" height="0.70" fill="#c9ccd6"/><rect x="32.70" y="49.30" width="5.00" height="0.70" fill="#c9ccd6"/><rect x="39.20" y="53.10" width="5.00" height="0.70" fill="#c9ccd6"/><rect x="40.45" y="54.40" width="2.50" height="0.70" fill="#c9ccd6"/><rect x="44.70" y="56.40" width="3.50" height="0.70" fill="#c9ccd6"/><rect x="45.58" y="57.70" width="1.75" height="0.70" fill="#c9ccd6"/><rect x="66.20" y="45.00" width="7.50" height="0.70" fill="#c9ccd6"/><rect x="68.08" y="46.30" width="3.75" height="0.70" fill="#c9ccd6"/><rect x="29.70" y="61.60" width="1.60" height="1.00" fill="#2f55e8" rx="0.3"/><rect x="31.90" y="61.70" width="6.50" height="0.70" fill="#c9ccd6"/><rect x="40.50" y="61.60" width="1.60" height="1.00" fill="#f7b13f" rx="0.3"/><rect x="42.70" y="61.70" width="1.80" height="0.70" fill="#c9ccd6"/><rect x="46.00" y="61.60" width="1.60" height="1.00" fill="#111" rx="0.3"/><rect x="48.20" y="61.70" width="2.80" height="0.70" fill="#c9ccd6"/><rect x="53.40" y="61.60" width="1.60" height="1.00" fill="#2dba6e" rx="0.3"/><rect x="55.60" y="61.70" width="9.50" height="0.70" fill="#c9ccd6"/><rect x="65.90" y="61.60" width="1.60" height="1.00" fill="#f0564a" rx="0.3"/><rect x="68.10" y="61.70" width="9.00" height="0.70" fill="#c9ccd6"/><rect x="31.70" y="63.70" width="8.00" height="0.70" fill="#c9ccd6"/><rect x="82.80" y="27.70" width="55.20" height="40.30" fill="#fff" rx="0.6"/><rect x="84.40" y="29.70" width="11.50" height="0.90" fill="#5b6070"/><rect x="93.30" y="34.30" width="8.00" height="0.70" fill="#c9ccd6"/><rect x="95.30" y="35.60" width="4.00" height="0.70" fill="#c9ccd6"/><rect x="89.30" y="37.80" width="9.00" height="0.70" fill="#c9ccd6"/><rect x="91.55" y="39.10" width="4.50" height="0.70" fill="#c9ccd6"/><rect x="87.80" y="48.00" width="10.00" height="0.70" fill="#c9ccd6"/><rect x="90.30" y="49.30" width="5.00" height="0.70" fill="#c9ccd6"/><rect x="96.80" y="53.10" width="5.00" height="0.70" fill="#c9ccd6"/><rect x="98.05" y="54.40" width="2.50" height="0.70" fill="#c9ccd6"/><rect x="102.30" y="56.40" width="3.50" height="0.70" fill="#c9ccd6"/><rect x="103.17" y="57.70" width="1.75" height="0.70" fill="#c9ccd6"/><rect x="123.80" y="45.00" width="7.50" height="0.70" fill="#c9ccd6"/><rect x="125.67" y="46.30" width="3.75" height="0.70" fill="#c9ccd6"/><rect x="87.30" y="61.60" width="1.60" height="1.00" fill="#2f55e8" rx="0.3"/><rect x="89.50" y="61.70" width="6.50" height="0.70" fill="#c9ccd6"/><rect x="98.10" y="61.60" width="1.60" height="1.00" fill="#f7b13f" rx="0.3"/><rect x="100.30" y="61.70" width="1.80" height="0.70" fill="#c9ccd6"/><rect x="103.60" y="61.60" width="1.60" height="1.00" fill="#111" rx="0.3"/><rect x="105.80" y="61.70" width="2.80" height="0.70" fill="#c9ccd6"/><rect x="111.00" y="61.60" width="1.60" height="1.00" fill="#2dba6e" rx="0.3"/><rect x="113.20" y="61.70" width="9.50" height="0.70" fill="#c9ccd6"/><rect x="123.50" y="61.60" width="1.60" height="1.00" fill="#f0564a" rx="0.3"/><rect x="125.70" y="61.70" width="9.00" height="0.70" fill="#c9ccd6"/><rect x="89.30" y="63.70" width="8.00" height="0.70" fill="#c9ccd6"/><path d="M52.70 36.10A9.7 9.7 0 0 1 57.81 54.05L55.96 51.07A6.2 6.2 0 0 0 52.70 39.60Z" fill="#2f55e8"/><path d="M57.81 54.05A9.7 9.7 0 0 1 54.48 55.33L53.84 51.89A6.2 6.2 0 0 0 55.96 51.07Z" fill="#f7b13f"/><path d="M54.48 55.33A9.7 9.7 0 0 1 49.20 54.84L50.46 51.58A6.2 6.2 0 0 0 53.84 51.89Z" fill="#111"/><path d="M49.20 54.84A9.7 9.7 0 0 1 43.04 44.90L46.53 45.23A6.2 6.2 0 0 0 50.46 51.58Z" fill="#2dba6e"/><path d="M43.04 44.90A9.7 9.7 0 0 1 47.59 37.55L49.44 40.53A6.2 6.2 0 0 0 46.53 45.23Z" fill="#f0564a"/><path d="M47.59 37.55A9.7 9.7 0 0 1 52.70 36.10L52.70 39.60A6.2 6.2 0 0 0 49.44 40.53Z" fill="#eef1f6"/><path d="M110.30 36.10A9.7 9.7 0 1 1 108.28 55.29L109.01 51.86A6.2 6.2 0 1 0 110.30 39.60Z" fill="#2f55e8"/><path d="M108.28 55.29A9.7 9.7 0 0 1 104.20 53.34L106.40 50.62A6.2 6.2 0 0 0 109.01 51.86Z" fill="#f7b13f"/><path d="M104.20 53.34A9.7 9.7 0 0 1 101.24 42.32L104.51 43.58A6.2 6.2 0 0 0 106.40 50.62Z" fill="#111"/><path d="M101.24 42.32A9.7 9.7 0 0 1 104.20 38.26L106.40 40.98A6.2 6.2 0 0 0 104.51 43.58Z" fill="#2dba6e"/><path d="M104.20 38.26A9.7 9.7 0 0 1 107.79 36.43L108.70 39.81A6.2 6.2 0 0 0 106.40 40.98Z" fill="#f0564a"/><path d="M107.79 36.43A9.7 9.7 0 0 1 110.30 36.10L110.30 39.60A6.2 6.2 0 0 0 108.70 39.81Z" fill="#eef1f6"/><rect x="25.10" y="69.50" width="84.80" height="21.00" fill="#fff" rx="0.6"/><rect x="111.70" y="69.50" width="26.60" height="21.00" fill="#fff" rx="0.6"/><rect x="26.80" y="71.40" width="19.00" height="0.90" fill="#5b6070"/><rect x="25.10" y="74.50" width="84.80" height="3.30" fill="#eef0f6"/><rect x="26.50" y="75.70" width="1.50" height="0.90" fill="#5b6070"/><rect x="33.00" y="75.70" width="4.00" height="0.90" fill="#5b6070"/><rect x="44.50" y="75.70" width="15.00" height="0.90" fill="#5b6070"/><rect x="93.50" y="75.70" width="2.50" height="0.90" fill="#5b6070"/><rect x="101.00" y="75.70" width="7.50" height="0.90" fill="#5b6070"/><rect x="26.50" y="80.40" width="3.00" height="0.80" fill="#c9ccd6"/><rect x="33.00" y="80.20" width="4.60" height="1.20" fill="#c9ccd6" rx="0.3"/><rect x="44.50" y="79.50" width="2.80" height="2.80" fill="#fff"/><rect x="44.5" y="79.70" width="2.2" height="2.2" fill="none" stroke="#c9ccd6" stroke-width=".3"/><rect x="49.00" y="80.40" width="32.00" height="0.80" fill="#c9ccd6"/><rect x="93.50" y="80.40" width="4.50" height="0.80" fill="#5b6070"/><rect x="101.00" y="80.40" width="5.00" height="0.80" fill="#4a6cf0"/><rect x="26.50" y="85.60" width="3.00" height="0.80" fill="#c9ccd6"/><rect x="33.00" y="85.40" width="4.60" height="1.20" fill="#6f7bea" rx="0.3"/><rect x="44.50" y="84.70" width="2.80" height="2.80" fill="#fff"/><rect x="44.5" y="84.90" width="2.2" height="2.2" fill="none" stroke="#c9ccd6" stroke-width=".3"/><rect x="49.00" y="85.60" width="25.00" height="0.80" fill="#c9ccd6"/><rect x="93.50" y="85.60" width="4.50" height="0.80" fill="#5b6070"/><rect x="101.00" y="85.60" width="7.50" height="0.80" fill="#4a6cf0"/><rect x="113.30" y="71.40" width="15.00" height="0.90" fill="#5b6070"/><rect x="119.00" y="75.60" width="10.00" height="0.70" fill="#c9ccd6"/><rect x="121.00" y="77.40" width="6.00" height="1.00" fill="#5b6070"/><rect x="113.20" y="81.80" width="12.20" height="1.60" fill="#a9b3ee"/><rect x="125.40" y="81.80" width="8.60" height="1.60" fill="#f7d3a0"/><rect x="134.00" y="81.80" width="2.20" height="1.60" fill="#8a8d96"/><rect x="113.30" y="86.20" width="1.00" height="1.00" fill="#6f7bea"/><rect x="115.20" y="86.30" width="7.00" height="0.70" fill="#c9ccd6"/><rect x="132.00" y="86.30" width="4.00" height="0.70" fill="#c9ccd6"/><rect x="138.60" y="33.00" width="2.40" height="11.50" fill="#8fd0c8" rx="0.8"/></g><rect x=".5" y=".5" width="141.2" height="88.6" rx="3.500" fill="none" stroke="#e8ebf6"/></svg>
<svg class="b" style="left:1118px;top:291.5px;" width="142.2" height="89.6" viewBox="0 0 142.2 89.6"><defs><clipPath id="tc2"><rect x=".5" y=".5" width="141.2" height="88.6" rx="3.500"/></clipPath></defs><g clip-path="url(#tc2)"><rect x="0.00" y="0.00" width="142.20" height="89.60" fill="#f4f5fa"/><rect x="0.00" y="0.00" width="22.60" height="89.60" fill="#1d1a4a"/><rect x="4.20" y="3.00" width="2.20" height="2.60" fill="#3f6df0" rx="0.6"/><rect x="7.20" y="3.20" width="11.00" height="2.20" fill="#fff" rx="0.4"/><rect x="2.20" y="9.00" width="3.00" height="0.80" fill="rgba(255,255,255,.72)"/><rect x="2.20" y="12.35" width="1.50" height="1.30" fill="#fff" rx="0.3"/><rect x="4.40" y="12.40" width="5.50" height="1.10" fill="#fff"/><rect x="2.20" y="16.65" width="1.50" height="1.30" fill="rgba(255,255,255,.72)" rx="0.3"/><rect x="4.40" y="16.70" width="6.50" height="1.10" fill="rgba(255,255,255,.72)"/><rect x="2.20" y="20.95" width="1.50" height="1.30" fill="rgba(255,255,255,.72)" rx="0.3"/><rect x="4.40" y="21.00" width="6.80" height="1.10" fill="rgba(255,255,255,.72)"/><rect x="2.20" y="25.25" width="1.50" height="1.30" fill="rgba(255,255,255,.72)" rx="0.3"/><rect x="4.40" y="25.30" width="4.60" height="1.10" fill="rgba(255,255,255,.72)"/><rect x="2.20" y="29.55" width="1.50" height="1.30" fill="rgba(255,255,255,.72)" rx="0.3"/><rect x="4.40" y="29.60" width="7.60" height="1.10" fill="rgba(255,255,255,.72)"/><rect x="2.20" y="33.85" width="1.50" height="1.30" fill="rgba(255,255,255,.72)" rx="0.3"/><rect x="4.40" y="33.90" width="5.20" height="1.10" fill="rgba(255,255,255,.72)"/><rect x="2.20" y="38.15" width="1.50" height="1.30" fill="rgba(255,255,255,.72)" rx="0.3"/><rect x="4.40" y="38.20" width="6.20" height="1.10" fill="rgba(255,255,255,.72)"/><rect x="2.20" y="42.45" width="1.50" height="1.30" fill="rgba(255,255,255,.72)" rx="0.3"/><rect x="4.40" y="42.50" width="5.60" height="1.10" fill="rgba(255,255,255,.72)"/><rect x="2.20" y="46.25" width="1.50" height="1.30" fill="rgba(255,255,255,.72)" rx="0.3"/><rect x="4.40" y="46.30" width="10.50" height="1.10" fill="rgba(255,255,255,.72)"/><rect x="1.20" y="11.50" width="17.00" height="2.90" fill="rgba(255,255,255,.10)" rx="0.6"/><rect x="22.60" y="0.00" width="119.60" height="7.20" fill="#fff"/><rect x="25.80" y="3.30" width="2.20" height="0.90" fill="#5b6070"/><rect x="30.00" y="3.30" width="1.00" height="1.00" fill="#c9ccd6"/><rect x="31.80" y="3.40" width="6.00" height="0.80" fill="#c9ccd6"/><rect x="106.20" y="3.10" width="1.30" height="1.30" fill="#8b90a0" rx="0.4"/><rect x="110.60" y="3.10" width="1.30" height="1.30" fill="#8b90a0" rx="0.4"/><rect x="115.00" y="3.10" width="1.30" height="1.30" fill="#8b90a0" rx="0.4"/><rect x="119.20" y="3.10" width="1.30" height="1.30" fill="#8b90a0" rx="0.4"/><circle cx="126.2" cy="3.700" r="1.600" fill="#111"/><rect x="129.00" y="2.60" width="7.00" height="0.90" fill="#5b6070"/><rect x="129.00" y="4.20" width="6.00" height="0.80" fill="#c9ccd6"/><rect x="25.10" y="9.50" width="5.00" height="1.10" fill="#5b6070"/><rect x="119.60" y="9.50" width="16.50" height="1.00" fill="#c9ccd6"/><rect x="25.10" y="13.60" width="26.60" height="12.20" fill="#fff" rx="0.6"/><rect x="25.10" y="24.90" width="26.60" height="0.90" fill="#a9abb2"/><rect x="27.10" y="15.70" width="9.50" height="0.80" fill="#c9ccd6"/><rect x="27.10" y="18.30" width="2.20" height="1.30" fill="#5b6070"/><rect x="27.10" y="21.80" width="3.60" height="1.00" fill="#24b98a"/><rect x="31.30" y="21.90" width="8.50" height="0.80" fill="#c9ccd6"/><rect x="45.50" y="15.00" width="4.20" height="4.20" fill="#d9dade" rx="0.5"/><rect x="54.00" y="13.60" width="26.60" height="12.20" fill="#fff" rx="0.6"/><rect x="54.00" y="24.90" width="26.60" height="0.90" fill="#a6dcc4"/><rect x="56.00" y="15.70" width="9.50" height="0.80" fill="#c9ccd6"/><rect x="56.00" y="18.30" width="2.20" height="1.30" fill="#5b6070"/><rect x="56.00" y="21.80" width="3.60" height="1.00" fill="#24b98a"/><rect x="60.20" y="21.90" width="8.50" height="0.80" fill="#c9ccd6"/><rect x="74.40" y="15.00" width="4.20" height="4.20" fill="#d6f0e4" rx="0.5"/><rect x="82.80" y="13.60" width="26.60" height="12.20" fill="#fff" rx="0.6"/><rect x="82.80" y="24.90" width="26.60" height="0.90" fill="#a9b3ee"/><rect x="84.80" y="15.70" width="9.50" height="0.80" fill="#c9ccd6"/><rect x="84.80" y="18.30" width="2.20" height="1.30" fill="#5b6070"/><rect x="84.80" y="21.80" width="3.60" height="1.00" fill="#24b98a"/><rect x="89.00" y="21.90" width="8.50" height="0.80" fill="#c9ccd6"/><rect x="103.20" y="15.00" width="4.20" height="4.20" fill="#dfe3fb" rx="0.5"/><rect x="111.70" y="13.60" width="26.60" height="12.20" fill="#fff" rx="0.6"/><rect x="111.70" y="24.90" width="26.60" height="0.90" fill="#a6dcc4"/><rect x="113.70" y="15.70" width="9.50" height="0.80" fill="#c9ccd6"/><rect x="113.70" y="18.30" width="2.20" height="1.30" fill="#5b6070"/><rect x="113.70" y="21.80" width="3.60" height="1.00" fill="#24b98a"/><rect x="117.90" y="21.90" width="8.50" height="0.80" fill="#c9ccd6"/><rect x="132.10" y="15.00" width="4.20" height="4.20" fill="#d6f0e4" rx="0.5"/><rect x="25.10" y="27.70" width="55.20" height="40.30" fill="#fff" rx="0.6"/><rect x="26.70" y="29.70" width="11.50" height="0.90" fill="#5b6070"/><rect x="35.70" y="34.30" width="8.00" height="0.70" fill="#c9ccd6"/><rect x="37.70" y="35.60" width="4.00" height="0.70" fill="#c9ccd6"/><rect x="31.70" y="37.80" width="9.00" height="0.70" fill="#c9ccd6"/><rect x="33.95" y="39.10" width="4.50" height="0.70" fill="#c9ccd6"/><rect x="30.20" y="48.00" width="10.00" height="0.70" fill="#c9ccd6"/><rect x="32.70" y="49.30" width="5.00" height="0.70" fill="#c9ccd6"/><rect x="39.20" y="53.10" width="5.00" height="0.70" fill="#c9ccd6"/><rect x="40.45" y="54.40" width="2.50" height="0.70" fill="#c9ccd6"/><rect x="44.70" y="56.40" width="3.50" height="0.70" fill="#c9ccd6"/><rect x="45.58" y="57.70" width="1.75" height="0.70" fill="#c9ccd6"/><rect x="66.20" y="45.00" width="7.50" height="0.70" fill="#c9ccd6"/><rect x="68.08" y="46.30" width="3.75" height="0.70" fill="#c9ccd6"/><rect x="29.70" y="61.60" width="1.60" height="1.00" fill="#2b1fb0" rx="0.3"/><rect x="31.90" y="61.70" width="6.50" height="0.70" fill="#c9ccd6"/><rect x="40.50" y="61.60" width="1.60" height="1.00" fill="#f7b13f" rx="0.3"/><rect x="42.70" y="61.70" width="1.80" height="0.70" fill="#c9ccd6"/><rect x="46.00" y="61.60" width="1.60" height="1.00" fill="#111" rx="0.3"/><rect x="48.20" y="61.70" width="2.80" height="0.70" fill="#c9ccd6"/><rect x="53.40" y="61.60" width="1.60" height="1.00" fill="#24b98a" rx="0.3"/><rect x="55.60" y="61.70" width="9.50" height="0.70" fill="#c9ccd6"/><rect x="65.90" y="61.60" width="1.60" height="1.00" fill="#f0564a" rx="0.3"/><rect x="68.10" y="61.70" width="9.00" height="0.70" fill="#c9ccd6"/><rect x="31.70" y="63.70" width="8.00" height="0.70" fill="#c9ccd6"/><rect x="82.80" y="27.70" width="55.20" height="40.30" fill="#fff" rx="0.6"/><rect x="84.40" y="29.70" width="11.50" height="0.90" fill="#5b6070"/><rect x="93.30" y="34.30" width="8.00" height="0.70" fill="#c9ccd6"/><rect x="95.30" y="35.60" width="4.00" height="0.70" fill="#c9ccd6"/><rect x="89.30" y="37.80" width="9.00" height="0.70" fill="#c9ccd6"/><rect x="91.55" y="39.10" width="4.50" height="0.70" fill="#c9ccd6"/><rect x="87.80" y="48.00" width="10.00" height="0.70" fill="#c9ccd6"/><rect x="90.30" y="49.30" width="5.00" height="0.70" fill="#c9ccd6"/><rect x="96.80" y="53.10" width="5.00" height="0.70" fill="#c9ccd6"/><rect x="98.05" y="54.40" width="2.50" height="0.70" fill="#c9ccd6"/><rect x="102.30" y="56.40" width="3.50" height="0.70" fill="#c9ccd6"/><rect x="103.17" y="57.70" width="1.75" height="0.70" fill="#c9ccd6"/><rect x="123.80" y="45.00" width="7.50" height="0.70" fill="#c9ccd6"/><rect x="125.67" y="46.30" width="3.75" height="0.70" fill="#c9ccd6"/><rect x="87.30" y="61.60" width="1.60" height="1.00" fill="#2b1fb0" rx="0.3"/><rect x="89.50" y="61.70" width="6.50" height="0.70" fill="#c9ccd6"/><rect x="98.10" y="61.60" width="1.60" height="1.00" fill="#f7b13f" rx="0.3"/><rect x="100.30" y="61.70" width="1.80" height="0.70" fill="#c9ccd6"/><rect x="103.60" y="61.60" width="1.60" height="1.00" fill="#111" rx="0.3"/><rect x="105.80" y="61.70" width="2.80" height="0.70" fill="#c9ccd6"/><rect x="111.00" y="61.60" width="1.60" height="1.00" fill="#24b98a" rx="0.3"/><rect x="113.20" y="61.70" width="9.50" height="0.70" fill="#c9ccd6"/><rect x="123.50" y="61.60" width="1.60" height="1.00" fill="#f0564a" rx="0.3"/><rect x="125.70" y="61.70" width="9.00" height="0.70" fill="#c9ccd6"/><rect x="89.30" y="63.70" width="8.00" height="0.70" fill="#c9ccd6"/><path d="M52.70 36.10A9.7 9.7 0 0 1 57.81 54.05L55.96 51.07A6.2 6.2 0 0 0 52.70 39.60Z" fill="#2b1fb0"/><path d="M57.81 54.05A9.7 9.7 0 0 1 54.48 55.33L53.84 51.89A6.2 6.2 0 0 0 55.96 51.07Z" fill="#f7b13f"/><path d="M54.48 55.33A9.7 9.7 0 0 1 49.20 54.84L50.46 51.58A6.2 6.2 0 0 0 53.84 51.89Z" fill="#111"/><path d="M49.20 54.84A9.7 9.7 0 0 1 43.04 44.90L46.53 45.23A6.2 6.2 0 0 0 50.46 51.58Z" fill="#24b98a"/><path d="M43.04 44.90A9.7 9.7 0 0 1 47.59 37.55L49.44 40.53A6.2 6.2 0 0 0 46.53 45.23Z" fill="#f0564a"/><path d="M47.59 37.55A9.7 9.7 0 0 1 52.70 36.10L52.70 39.60A6.2 6.2 0 0 0 49.44 40.53Z" fill="#eef1f6"/><path d="M110.30 36.10A9.7 9.7 0 1 1 108.28 55.29L109.01 51.86A6.2 6.2 0 1 0 110.30 39.60Z" fill="#2b1fb0"/><path d="M108.28 55.29A9.7 9.7 0 0 1 104.20 53.34L106.40 50.62A6.2 6.2 0 0 0 109.01 51.86Z" fill="#f7b13f"/><path d="M104.20 53.34A9.7 9.7 0 0 1 101.24 42.32L104.51 43.58A6.2 6.2 0 0 0 106.40 50.62Z" fill="#111"/><path d="M101.24 42.32A9.7 9.7 0 0 1 104.20 38.26L106.40 40.98A6.2 6.2 0 0 0 104.51 43.58Z" fill="#24b98a"/><path d="M104.20 38.26A9.7 9.7 0 0 1 107.79 36.43L108.70 39.81A6.2 6.2 0 0 0 106.40 40.98Z" fill="#f0564a"/><path d="M107.79 36.43A9.7 9.7 0 0 1 110.30 36.10L110.30 39.60A6.2 6.2 0 0 0 108.70 39.81Z" fill="#eef1f6"/><rect x="25.10" y="69.50" width="84.80" height="21.00" fill="#fff" rx="0.6"/><rect x="111.70" y="69.50" width="26.60" height="21.00" fill="#fff" rx="0.6"/><rect x="26.80" y="71.40" width="19.00" height="0.90" fill="#5b6070"/><rect x="25.10" y="74.50" width="84.80" height="3.30" fill="#eef0f6"/><rect x="26.50" y="75.70" width="1.50" height="0.90" fill="#5b6070"/><rect x="33.00" y="75.70" width="4.00" height="0.90" fill="#5b6070"/><rect x="44.50" y="75.70" width="15.00" height="0.90" fill="#5b6070"/><rect x="93.50" y="75.70" width="2.50" height="0.90" fill="#5b6070"/><rect x="101.00" y="75.70" width="7.50" height="0.90" fill="#5b6070"/><rect x="26.50" y="80.40" width="3.00" height="0.80" fill="#c9ccd6"/><rect x="33.00" y="80.20" width="4.60" height="1.20" fill="#c9ccd6" rx="0.3"/><rect x="44.50" y="79.50" width="2.80" height="2.80" fill="#fff"/><rect x="44.5" y="79.70" width="2.2" height="2.2" fill="none" stroke="#c9ccd6" stroke-width=".3"/><rect x="49.00" y="80.40" width="32.00" height="0.80" fill="#c9ccd6"/><rect x="93.50" y="80.40" width="4.50" height="0.80" fill="#5b6070"/><rect x="101.00" y="80.40" width="5.00" height="0.80" fill="#4a6cf0"/><rect x="26.50" y="85.60" width="3.00" height="0.80" fill="#c9ccd6"/><rect x="33.00" y="85.40" width="4.60" height="1.20" fill="#6f7bea" rx="0.3"/><rect x="44.50" y="84.70" width="2.80" height="2.80" fill="#fff"/><rect x="44.5" y="84.90" width="2.2" height="2.2" fill="none" stroke="#c9ccd6" stroke-width=".3"/><rect x="49.00" y="85.60" width="25.00" height="0.80" fill="#c9ccd6"/><rect x="93.50" y="85.60" width="4.50" height="0.80" fill="#5b6070"/><rect x="101.00" y="85.60" width="7.50" height="0.80" fill="#4a6cf0"/><rect x="113.30" y="71.40" width="15.00" height="0.90" fill="#5b6070"/><rect x="119.00" y="75.60" width="10.00" height="0.70" fill="#c9ccd6"/><rect x="121.00" y="77.40" width="6.00" height="1.00" fill="#5b6070"/><rect x="113.20" y="81.80" width="12.20" height="1.60" fill="#a9b3ee"/><rect x="125.40" y="81.80" width="8.60" height="1.60" fill="#f7d3a0"/><rect x="134.00" y="81.80" width="2.20" height="1.60" fill="#8a8d96"/><rect x="113.30" y="86.20" width="1.00" height="1.00" fill="#6f7bea"/><rect x="115.20" y="86.30" width="7.00" height="0.70" fill="#c9ccd6"/><rect x="132.00" y="86.30" width="4.00" height="0.70" fill="#c9ccd6"/><rect x="138.60" y="33.00" width="2.40" height="11.50" fill="#a6dff0" rx="0.8"/></g><rect x=".5" y=".5" width="141.2" height="88.6" rx="3.500" fill="none" stroke="#e8ebf6"/></svg>
<svg class="b" style="left:962.2px;top:408px;" width="142.2" height="89.6" viewBox="0 0 142.2 89.6"><defs><clipPath id="tc3"><rect x=".5" y=".5" width="141.2" height="88.6" rx="3.500"/></clipPath></defs><g clip-path="url(#tc3)"><rect x="0.00" y="0.00" width="142.20" height="89.60" fill="#f4f5fa"/><rect x="0.00" y="0.00" width="22.60" height="89.60" fill="#0d4a3e"/><rect x="4.20" y="3.00" width="2.20" height="2.60" fill="#3f6df0" rx="0.6"/><rect x="7.20" y="3.20" width="11.00" height="2.20" fill="#fff" rx="0.4"/><rect x="2.20" y="9.00" width="3.00" height="0.80" fill="rgba(255,255,255,.72)"/><rect x="2.20" y="12.35" width="1.50" height="1.30" fill="#fff" rx="0.3"/><rect x="4.40" y="12.40" width="5.50" height="1.10" fill="#fff"/><rect x="2.20" y="16.65" width="1.50" height="1.30" fill="rgba(255,255,255,.72)" rx="0.3"/><rect x="4.40" y="16.70" width="6.50" height="1.10" fill="rgba(255,255,255,.72)"/><rect x="2.20" y="20.95" width="1.50" height="1.30" fill="rgba(255,255,255,.72)" rx="0.3"/><rect x="4.40" y="21.00" width="6.80" height="1.10" fill="rgba(255,255,255,.72)"/><rect x="2.20" y="25.25" width="1.50" height="1.30" fill="rgba(255,255,255,.72)" rx="0.3"/><rect x="4.40" y="25.30" width="4.60" height="1.10" fill="rgba(255,255,255,.72)"/><rect x="2.20" y="29.55" width="1.50" height="1.30" fill="rgba(255,255,255,.72)" rx="0.3"/><rect x="4.40" y="29.60" width="7.60" height="1.10" fill="rgba(255,255,255,.72)"/><rect x="2.20" y="33.85" width="1.50" height="1.30" fill="rgba(255,255,255,.72)" rx="0.3"/><rect x="4.40" y="33.90" width="5.20" height="1.10" fill="rgba(255,255,255,.72)"/><rect x="2.20" y="38.15" width="1.50" height="1.30" fill="rgba(255,255,255,.72)" rx="0.3"/><rect x="4.40" y="38.20" width="6.20" height="1.10" fill="rgba(255,255,255,.72)"/><rect x="2.20" y="42.45" width="1.50" height="1.30" fill="rgba(255,255,255,.72)" rx="0.3"/><rect x="4.40" y="42.50" width="5.60" height="1.10" fill="rgba(255,255,255,.72)"/><rect x="2.20" y="46.25" width="1.50" height="1.30" fill="rgba(255,255,255,.72)" rx="0.3"/><rect x="4.40" y="46.30" width="10.50" height="1.10" fill="rgba(255,255,255,.72)"/><rect x="1.20" y="11.50" width="17.00" height="2.90" fill="rgba(255,255,255,.10)" rx="0.6"/><rect x="22.60" y="0.00" width="119.60" height="7.20" fill="#fff"/><rect x="25.80" y="3.30" width="2.20" height="0.90" fill="#5b6070"/><rect x="30.00" y="3.30" width="1.00" height="1.00" fill="#c9ccd6"/><rect x="31.80" y="3.40" width="6.00" height="0.80" fill="#c9ccd6"/><rect x="106.20" y="3.10" width="1.30" height="1.30" fill="#8b90a0" rx="0.4"/><rect x="110.60" y="3.10" width="1.30" height="1.30" fill="#8b90a0" rx="0.4"/><rect x="115.00" y="3.10" width="1.30" height="1.30" fill="#8b90a0" rx="0.4"/><rect x="119.20" y="3.10" width="1.30" height="1.30" fill="#8b90a0" rx="0.4"/><circle cx="126.2" cy="3.700" r="1.600" fill="#111"/><rect x="129.00" y="2.60" width="7.00" height="0.90" fill="#5b6070"/><rect x="129.00" y="4.20" width="6.00" height="0.80" fill="#c9ccd6"/><rect x="25.10" y="9.50" width="5.00" height="1.10" fill="#5b6070"/><rect x="119.60" y="9.50" width="16.50" height="1.00" fill="#c9ccd6"/><rect x="25.10" y="13.60" width="26.60" height="12.20" fill="#fff" rx="0.6"/><rect x="25.10" y="24.90" width="26.60" height="0.90" fill="#a9abb2"/><rect x="27.10" y="15.70" width="9.50" height="0.80" fill="#c9ccd6"/><rect x="27.10" y="18.30" width="2.20" height="1.30" fill="#5b6070"/><rect x="27.10" y="21.80" width="3.60" height="1.00" fill="#24b98a"/><rect x="31.30" y="21.90" width="8.50" height="0.80" fill="#c9ccd6"/><rect x="45.50" y="15.00" width="4.20" height="4.20" fill="#d9dade" rx="0.5"/><rect x="54.00" y="13.60" width="26.60" height="12.20" fill="#fff" rx="0.6"/><rect x="54.00" y="24.90" width="26.60" height="0.90" fill="#a6dcc4"/><rect x="56.00" y="15.70" width="9.50" height="0.80" fill="#c9ccd6"/><rect x="56.00" y="18.30" width="2.20" height="1.30" fill="#5b6070"/><rect x="56.00" y="21.80" width="3.60" height="1.00" fill="#24b98a"/><rect x="60.20" y="21.90" width="8.50" height="0.80" fill="#c9ccd6"/><rect x="74.40" y="15.00" width="4.20" height="4.20" fill="#d6f0e4" rx="0.5"/><rect x="82.80" y="13.60" width="26.60" height="12.20" fill="#fff" rx="0.6"/><rect x="82.80" y="24.90" width="26.60" height="0.90" fill="#a9b3ee"/><rect x="84.80" y="15.70" width="9.50" height="0.80" fill="#c9ccd6"/><rect x="84.80" y="18.30" width="2.20" height="1.30" fill="#5b6070"/><rect x="84.80" y="21.80" width="3.60" height="1.00" fill="#24b98a"/><rect x="89.00" y="21.90" width="8.50" height="0.80" fill="#c9ccd6"/><rect x="103.20" y="15.00" width="4.20" height="4.20" fill="#dfe3fb" rx="0.5"/><rect x="111.70" y="13.60" width="26.60" height="12.20" fill="#fff" rx="0.6"/><rect x="111.70" y="24.90" width="26.60" height="0.90" fill="#a6dcc4"/><rect x="113.70" y="15.70" width="9.50" height="0.80" fill="#c9ccd6"/><rect x="113.70" y="18.30" width="2.20" height="1.30" fill="#5b6070"/><rect x="113.70" y="21.80" width="3.60" height="1.00" fill="#24b98a"/><rect x="117.90" y="21.90" width="8.50" height="0.80" fill="#c9ccd6"/><rect x="132.10" y="15.00" width="4.20" height="4.20" fill="#d6f0e4" rx="0.5"/><rect x="25.10" y="27.70" width="55.20" height="40.30" fill="#fff" rx="0.6"/><rect x="26.70" y="29.70" width="11.50" height="0.90" fill="#5b6070"/><rect x="35.70" y="34.30" width="8.00" height="0.70" fill="#c9ccd6"/><rect x="37.70" y="35.60" width="4.00" height="0.70" fill="#c9ccd6"/><rect x="31.70" y="37.80" width="9.00" height="0.70" fill="#c9ccd6"/><rect x="33.95" y="39.10" width="4.50" height="0.70" fill="#c9ccd6"/><rect x="30.20" y="48.00" width="10.00" height="0.70" fill="#c9ccd6"/><rect x="32.70" y="49.30" width="5.00" height="0.70" fill="#c9ccd6"/><rect x="39.20" y="53.10" width="5.00" height="0.70" fill="#c9ccd6"/><rect x="40.45" y="54.40" width="2.50" height="0.70" fill="#c9ccd6"/><rect x="44.70" y="56.40" width="3.50" height="0.70" fill="#c9ccd6"/><rect x="45.58" y="57.70" width="1.75" height="0.70" fill="#c9ccd6"/><rect x="66.20" y="45.00" width="7.50" height="0.70" fill="#c9ccd6"/><rect x="68.08" y="46.30" width="3.75" height="0.70" fill="#c9ccd6"/><rect x="29.70" y="61.60" width="1.60" height="1.00" fill="#0f736d" rx="0.3"/><rect x="31.90" y="61.70" width="6.50" height="0.70" fill="#c9ccd6"/><rect x="40.50" y="61.60" width="1.60" height="1.00" fill="#f7b13f" rx="0.3"/><rect x="42.70" y="61.70" width="1.80" height="0.70" fill="#c9ccd6"/><rect x="46.00" y="61.60" width="1.60" height="1.00" fill="#111" rx="0.3"/><rect x="48.20" y="61.70" width="2.80" height="0.70" fill="#c9ccd6"/><rect x="53.40" y="61.60" width="1.60" height="1.00" fill="#24b98a" rx="0.3"/><rect x="55.60" y="61.70" width="9.50" height="0.70" fill="#c9ccd6"/><rect x="65.90" y="61.60" width="1.60" height="1.00" fill="#f0564a" rx="0.3"/><rect x="68.10" y="61.70" width="9.00" height="0.70" fill="#c9ccd6"/><rect x="31.70" y="63.70" width="8.00" height="0.70" fill="#c9ccd6"/><rect x="82.80" y="27.70" width="55.20" height="40.30" fill="#fff" rx="0.6"/><rect x="84.40" y="29.70" width="11.50" height="0.90" fill="#5b6070"/><rect x="93.30" y="34.30" width="8.00" height="0.70" fill="#c9ccd6"/><rect x="95.30" y="35.60" width="4.00" height="0.70" fill="#c9ccd6"/><rect x="89.30" y="37.80" width="9.00" height="0.70" fill="#c9ccd6"/><rect x="91.55" y="39.10" width="4.50" height="0.70" fill="#c9ccd6"/><rect x="87.80" y="48.00" width="10.00" height="0.70" fill="#c9ccd6"/><rect x="90.30" y="49.30" width="5.00" height="0.70" fill="#c9ccd6"/><rect x="96.80" y="53.10" width="5.00" height="0.70" fill="#c9ccd6"/><rect x="98.05" y="54.40" width="2.50" height="0.70" fill="#c9ccd6"/><rect x="102.30" y="56.40" width="3.50" height="0.70" fill="#c9ccd6"/><rect x="103.17" y="57.70" width="1.75" height="0.70" fill="#c9ccd6"/><rect x="123.80" y="45.00" width="7.50" height="0.70" fill="#c9ccd6"/><rect x="125.67" y="46.30" width="3.75" height="0.70" fill="#c9ccd6"/><rect x="87.30" y="61.60" width="1.60" height="1.00" fill="#0f736d" rx="0.3"/><rect x="89.50" y="61.70" width="6.50" height="0.70" fill="#c9ccd6"/><rect x="98.10" y="61.60" width="1.60" height="1.00" fill="#f7b13f" rx="0.3"/><rect x="100.30" y="61.70" width="1.80" height="0.70" fill="#c9ccd6"/><rect x="103.60" y="61.60" width="1.60" height="1.00" fill="#111" rx="0.3"/><rect x="105.80" y="61.70" width="2.80" height="0.70" fill="#c9ccd6"/><rect x="111.00" y="61.60" width="1.60" height="1.00" fill="#24b98a" rx="0.3"/><rect x="113.20" y="61.70" width="9.50" height="0.70" fill="#c9ccd6"/><rect x="123.50" y="61.60" width="1.60" height="1.00" fill="#f0564a" rx="0.3"/><rect x="125.70" y="61.70" width="9.00" height="0.70" fill="#c9ccd6"/><rect x="89.30" y="63.70" width="8.00" height="0.70" fill="#c9ccd6"/><path d="M52.70 36.10A9.7 9.7 0 0 1 57.81 54.05L55.96 51.07A6.2 6.2 0 0 0 52.70 39.60Z" fill="#0f736d"/><path d="M57.81 54.05A9.7 9.7 0 0 1 54.48 55.33L53.84 51.89A6.2 6.2 0 0 0 55.96 51.07Z" fill="#f7b13f"/><path d="M54.48 55.33A9.7 9.7 0 0 1 49.20 54.84L50.46 51.58A6.2 6.2 0 0 0 53.84 51.89Z" fill="#111"/><path d="M49.20 54.84A9.7 9.7 0 0 1 43.04 44.90L46.53 45.23A6.2 6.2 0 0 0 50.46 51.58Z" fill="#24b98a"/><path d="M43.04 44.90A9.7 9.7 0 0 1 47.59 37.55L49.44 40.53A6.2 6.2 0 0 0 46.53 45.23Z" fill="#f0564a"/><path d="M47.59 37.55A9.7 9.7 0 0 1 52.70 36.10L52.70 39.60A6.2 6.2 0 0 0 49.44 40.53Z" fill="#eef1f6"/><path d="M110.30 36.10A9.7 9.7 0 1 1 108.28 55.29L109.01 51.86A6.2 6.2 0 1 0 110.30 39.60Z" fill="#0f736d"/><path d="M108.28 55.29A9.7 9.7 0 0 1 104.20 53.34L106.40 50.62A6.2 6.2 0 0 0 109.01 51.86Z" fill="#f7b13f"/><path d="M104.20 53.34A9.7 9.7 0 0 1 101.24 42.32L104.51 43.58A6.2 6.2 0 0 0 106.40 50.62Z" fill="#111"/><path d="M101.24 42.32A9.7 9.7 0 0 1 104.20 38.26L106.40 40.98A6.2 6.2 0 0 0 104.51 43.58Z" fill="#24b98a"/><path d="M104.20 38.26A9.7 9.7 0 0 1 107.79 36.43L108.70 39.81A6.2 6.2 0 0 0 106.40 40.98Z" fill="#f0564a"/><path d="M107.79 36.43A9.7 9.7 0 0 1 110.30 36.10L110.30 39.60A6.2 6.2 0 0 0 108.70 39.81Z" fill="#eef1f6"/><rect x="25.10" y="69.50" width="84.80" height="21.00" fill="#fff" rx="0.6"/><rect x="111.70" y="69.50" width="26.60" height="21.00" fill="#fff" rx="0.6"/><rect x="26.80" y="71.40" width="19.00" height="0.90" fill="#5b6070"/><rect x="25.10" y="74.50" width="84.80" height="3.30" fill="#eef0f6"/><rect x="26.50" y="75.70" width="1.50" height="0.90" fill="#5b6070"/><rect x="33.00" y="75.70" width="4.00" height="0.90" fill="#5b6070"/><rect x="44.50" y="75.70" width="15.00" height="0.90" fill="#5b6070"/><rect x="93.50" y="75.70" width="2.50" height="0.90" fill="#5b6070"/><rect x="101.00" y="75.70" width="7.50" height="0.90" fill="#5b6070"/><rect x="26.50" y="80.40" width="3.00" height="0.80" fill="#c9ccd6"/><rect x="33.00" y="80.20" width="4.60" height="1.20" fill="#c9ccd6" rx="0.3"/><rect x="44.50" y="79.50" width="2.80" height="2.80" fill="#fff"/><rect x="44.5" y="79.70" width="2.2" height="2.2" fill="none" stroke="#c9ccd6" stroke-width=".3"/><rect x="49.00" y="80.40" width="32.00" height="0.80" fill="#c9ccd6"/><rect x="93.50" y="80.40" width="4.50" height="0.80" fill="#5b6070"/><rect x="101.00" y="80.40" width="5.00" height="0.80" fill="#4a6cf0"/><rect x="26.50" y="85.60" width="3.00" height="0.80" fill="#c9ccd6"/><rect x="33.00" y="85.40" width="4.60" height="1.20" fill="#6f7bea" rx="0.3"/><rect x="44.50" y="84.70" width="2.80" height="2.80" fill="#fff"/><rect x="44.5" y="84.90" width="2.2" height="2.2" fill="none" stroke="#c9ccd6" stroke-width=".3"/><rect x="49.00" y="85.60" width="25.00" height="0.80" fill="#c9ccd6"/><rect x="93.50" y="85.60" width="4.50" height="0.80" fill="#5b6070"/><rect x="101.00" y="85.60" width="7.50" height="0.80" fill="#4a6cf0"/><rect x="113.30" y="71.40" width="15.00" height="0.90" fill="#5b6070"/><rect x="119.00" y="75.60" width="10.00" height="0.70" fill="#c9ccd6"/><rect x="121.00" y="77.40" width="6.00" height="1.00" fill="#5b6070"/><rect x="113.20" y="81.80" width="12.20" height="1.60" fill="#a9b3ee"/><rect x="125.40" y="81.80" width="8.60" height="1.60" fill="#f7d3a0"/><rect x="134.00" y="81.80" width="2.20" height="1.60" fill="#8a8d96"/><rect x="113.30" y="86.20" width="1.00" height="1.00" fill="#6f7bea"/><rect x="115.20" y="86.30" width="7.00" height="0.70" fill="#c9ccd6"/><rect x="132.00" y="86.30" width="4.00" height="0.70" fill="#c9ccd6"/><rect x="138.60" y="33.00" width="2.40" height="11.50" fill="#aab4f0" rx="0.8"/></g><rect x=".5" y=".5" width="141.2" height="88.6" rx="3.500" fill="none" stroke="#e8ebf6"/></svg>
<svg class="b" style="left:1118px;top:408px;" width="142.2" height="89.6" viewBox="0 0 142.2 89.6"><defs><clipPath id="tc4"><rect x=".5" y=".5" width="141.2" height="88.6" rx="3.500"/></clipPath></defs><g clip-path="url(#tc4)"><rect x="0.00" y="0.00" width="142.20" height="89.60" fill="#fdfdfe"/><rect x="0.00" y="0.00" width="22.60" height="89.60" fill="#ffffff"/><rect x="22.40" y="0.00" width="0.50" height="89.60" fill="#e6e8f0"/><rect x="4.20" y="3.00" width="2.20" height="2.60" fill="#3d55d0" rx="0.6"/><rect x="7.20" y="3.20" width="11.00" height="2.20" fill="#20242c" rx="0.4"/><rect x="2.20" y="9.00" width="3.00" height="0.80" fill="#9aa0b0"/><rect x="2.20" y="12.35" width="1.50" height="1.30" fill="#3d78e3" rx="0.3"/><rect x="4.40" y="12.40" width="5.50" height="1.10" fill="#3d78e3"/><rect x="2.20" y="16.65" width="1.50" height="1.30" fill="#9aa0b0" rx="0.3"/><rect x="4.40" y="16.70" width="6.50" height="1.10" fill="#9aa0b0"/><rect x="2.20" y="20.95" width="1.50" height="1.30" fill="#9aa0b0" rx="0.3"/><rect x="4.40" y="21.00" width="6.80" height="1.10" fill="#9aa0b0"/><rect x="2.20" y="25.25" width="1.50" height="1.30" fill="#9aa0b0" rx="0.3"/><rect x="4.40" y="25.30" width="4.60" height="1.10" fill="#9aa0b0"/><rect x="2.20" y="29.55" width="1.50" height="1.30" fill="#9aa0b0" rx="0.3"/><rect x="4.40" y="29.60" width="7.60" height="1.10" fill="#9aa0b0"/><rect x="2.20" y="33.85" width="1.50" height="1.30" fill="#9aa0b0" rx="0.3"/><rect x="4.40" y="33.90" width="5.20" height="1.10" fill="#9aa0b0"/><rect x="2.20" y="38.15" width="1.50" height="1.30" fill="#9aa0b0" rx="0.3"/><rect x="4.40" y="38.20" width="6.20" height="1.10" fill="#9aa0b0"/><rect x="2.20" y="42.45" width="1.50" height="1.30" fill="#9aa0b0" rx="0.3"/><rect x="4.40" y="42.50" width="5.60" height="1.10" fill="#9aa0b0"/><rect x="2.20" y="46.25" width="1.50" height="1.30" fill="#9aa0b0" rx="0.3"/><rect x="4.40" y="46.30" width="10.50" height="1.10" fill="#9aa0b0"/><rect x="22.60" y="0.00" width="119.60" height="7.20" fill="#fff"/><rect x="25.80" y="3.30" width="2.20" height="0.90" fill="#5b6070"/><rect x="30.00" y="3.30" width="1.00" height="1.00" fill="#c9ccd6"/><rect x="31.80" y="3.40" width="6.00" height="0.80" fill="#c9ccd6"/><rect x="106.20" y="3.10" width="1.30" height="1.30" fill="#8b90a0" rx="0.4"/><rect x="110.60" y="3.10" width="1.30" height="1.30" fill="#8b90a0" rx="0.4"/><rect x="115.00" y="3.10" width="1.30" height="1.30" fill="#8b90a0" rx="0.4"/><rect x="119.20" y="3.10" width="1.30" height="1.30" fill="#8b90a0" rx="0.4"/><circle cx="126.2" cy="3.700" r="1.600" fill="#111"/><rect x="129.00" y="2.60" width="7.00" height="0.90" fill="#5b6070"/><rect x="129.00" y="4.20" width="6.00" height="0.80" fill="#c9ccd6"/><rect x="25.10" y="9.50" width="5.00" height="1.10" fill="#5b6070"/><rect x="119.60" y="9.50" width="16.50" height="1.00" fill="#c9ccd6"/><rect x="25.10" y="13.60" width="26.60" height="12.20" fill="#fff" rx="0.6"/><rect x="25.10" y="24.50" width="26.60" height="1.40" fill="#b9bbc2"/><rect x="27.10" y="15.70" width="9.50" height="0.80" fill="#c9ccd6"/><rect x="27.10" y="18.30" width="2.20" height="1.30" fill="#5b6070"/><rect x="27.10" y="21.80" width="3.60" height="1.00" fill="#24b98a"/><rect x="31.30" y="21.90" width="8.50" height="0.80" fill="#c9ccd6"/><rect x="45.50" y="15.00" width="4.20" height="4.20" fill="#d9dade" rx="0.5"/><rect x="54.00" y="13.60" width="26.60" height="12.20" fill="#fff" rx="0.6"/><rect x="54.00" y="24.50" width="26.60" height="1.40" fill="#c3cbf3"/><rect x="56.00" y="15.70" width="9.50" height="0.80" fill="#c9ccd6"/><rect x="56.00" y="18.30" width="2.20" height="1.30" fill="#5b6070"/><rect x="56.00" y="21.80" width="3.60" height="1.00" fill="#24b98a"/><rect x="60.20" y="21.90" width="8.50" height="0.80" fill="#c9ccd6"/><rect x="74.40" y="15.00" width="4.20" height="4.20" fill="#d6f0e4" rx="0.5"/><rect x="82.80" y="13.60" width="26.60" height="12.20" fill="#fff" rx="0.6"/><rect x="82.80" y="24.50" width="26.60" height="1.40" fill="#c3cbf3"/><rect x="84.80" y="15.70" width="9.50" height="0.80" fill="#c9ccd6"/><rect x="84.80" y="18.30" width="2.20" height="1.30" fill="#5b6070"/><rect x="84.80" y="21.80" width="3.60" height="1.00" fill="#24b98a"/><rect x="89.00" y="21.90" width="8.50" height="0.80" fill="#c9ccd6"/><rect x="103.20" y="15.00" width="4.20" height="4.20" fill="#dfe3fb" rx="0.5"/><rect x="111.70" y="13.60" width="26.60" height="12.20" fill="#fff" rx="0.6"/><rect x="111.70" y="24.50" width="26.60" height="1.40" fill="#a6dcc4"/><rect x="113.70" y="15.70" width="9.50" height="0.80" fill="#c9ccd6"/><rect x="113.70" y="18.30" width="2.20" height="1.30" fill="#5b6070"/><rect x="113.70" y="21.80" width="3.60" height="1.00" fill="#24b98a"/><rect x="117.90" y="21.90" width="8.50" height="0.80" fill="#c9ccd6"/><rect x="132.10" y="15.00" width="4.20" height="4.20" fill="#d6f0e4" rx="0.5"/><rect x="25.10" y="27.70" width="55.20" height="40.30" fill="#fff" rx="0.6"/><rect x="26.70" y="29.70" width="11.50" height="0.90" fill="#5b6070"/><rect x="35.70" y="34.30" width="8.00" height="0.70" fill="#c9ccd6"/><rect x="37.70" y="35.60" width="4.00" height="0.70" fill="#c9ccd6"/><rect x="31.70" y="37.80" width="9.00" height="0.70" fill="#c9ccd6"/><rect x="33.95" y="39.10" width="4.50" height="0.70" fill="#c9ccd6"/><rect x="30.20" y="48.00" width="10.00" height="0.70" fill="#c9ccd6"/><rect x="32.70" y="49.30" width="5.00" height="0.70" fill="#c9ccd6"/><rect x="39.20" y="53.10" width="5.00" height="0.70" fill="#c9ccd6"/><rect x="40.45" y="54.40" width="2.50" height="0.70" fill="#c9ccd6"/><rect x="44.70" y="56.40" width="3.50" height="0.70" fill="#c9ccd6"/><rect x="45.58" y="57.70" width="1.75" height="0.70" fill="#c9ccd6"/><rect x="66.20" y="45.00" width="7.50" height="0.70" fill="#c9ccd6"/><rect x="68.08" y="46.30" width="3.75" height="0.70" fill="#c9ccd6"/><rect x="29.70" y="61.60" width="1.60" height="1.00" fill="#3d78e3" rx="0.3"/><rect x="31.90" y="61.70" width="6.50" height="0.70" fill="#c9ccd6"/><rect x="40.50" y="61.60" width="1.60" height="1.00" fill="#f7b13f" rx="0.3"/><rect x="42.70" y="61.70" width="1.80" height="0.70" fill="#c9ccd6"/><rect x="46.00" y="61.60" width="1.60" height="1.00" fill="#111" rx="0.3"/><rect x="48.20" y="61.70" width="2.80" height="0.70" fill="#c9ccd6"/><rect x="53.40" y="61.60" width="1.60" height="1.00" fill="#24b98a" rx="0.3"/><rect x="55.60" y="61.70" width="9.50" height="0.70" fill="#c9ccd6"/><rect x="65.90" y="61.60" width="1.60" height="1.00" fill="#f0564a" rx="0.3"/><rect x="68.10" y="61.70" width="9.00" height="0.70" fill="#c9ccd6"/><rect x="31.70" y="63.70" width="8.00" height="0.70" fill="#c9ccd6"/><rect x="82.80" y="27.70" width="55.20" height="40.30" fill="#fff" rx="0.6"/><rect x="84.40" y="29.70" width="11.50" height="0.90" fill="#5b6070"/><rect x="93.30" y="34.30" width="8.00" height="0.70" fill="#c9ccd6"/><rect x="95.30" y="35.60" width="4.00" height="0.70" fill="#c9ccd6"/><rect x="89.30" y="37.80" width="9.00" height="0.70" fill="#c9ccd6"/><rect x="91.55" y="39.10" width="4.50" height="0.70" fill="#c9ccd6"/><rect x="87.80" y="48.00" width="10.00" height="0.70" fill="#c9ccd6"/><rect x="90.30" y="49.30" width="5.00" height="0.70" fill="#c9ccd6"/><rect x="96.80" y="53.10" width="5.00" height="0.70" fill="#c9ccd6"/><rect x="98.05" y="54.40" width="2.50" height="0.70" fill="#c9ccd6"/><rect x="102.30" y="56.40" width="3.50" height="0.70" fill="#c9ccd6"/><rect x="103.17" y="57.70" width="1.75" height="0.70" fill="#c9ccd6"/><rect x="123.80" y="45.00" width="7.50" height="0.70" fill="#c9ccd6"/><rect x="125.67" y="46.30" width="3.75" height="0.70" fill="#c9ccd6"/><rect x="87.30" y="61.60" width="1.60" height="1.00" fill="#3d78e3" rx="0.3"/><rect x="89.50" y="61.70" width="6.50" height="0.70" fill="#c9ccd6"/><rect x="98.10" y="61.60" width="1.60" height="1.00" fill="#f7b13f" rx="0.3"/><rect x="100.30" y="61.70" width="1.80" height="0.70" fill="#c9ccd6"/><rect x="103.60" y="61.60" width="1.60" height="1.00" fill="#111" rx="0.3"/><rect x="105.80" y="61.70" width="2.80" height="0.70" fill="#c9ccd6"/><rect x="111.00" y="61.60" width="1.60" height="1.00" fill="#24b98a" rx="0.3"/><rect x="113.20" y="61.70" width="9.50" height="0.70" fill="#c9ccd6"/><rect x="123.50" y="61.60" width="1.60" height="1.00" fill="#f0564a" rx="0.3"/><rect x="125.70" y="61.70" width="9.00" height="0.70" fill="#c9ccd6"/><rect x="89.30" y="63.70" width="8.00" height="0.70" fill="#c9ccd6"/><path d="M52.70 36.10A9.7 9.7 0 0 1 57.81 54.05L55.96 51.07A6.2 6.2 0 0 0 52.70 39.60Z" fill="#3d78e3"/><path d="M57.81 54.05A9.7 9.7 0 0 1 54.48 55.33L53.84 51.89A6.2 6.2 0 0 0 55.96 51.07Z" fill="#f7b13f"/><path d="M54.48 55.33A9.7 9.7 0 0 1 49.20 54.84L50.46 51.58A6.2 6.2 0 0 0 53.84 51.89Z" fill="#111"/><path d="M49.20 54.84A9.7 9.7 0 0 1 43.04 44.90L46.53 45.23A6.2 6.2 0 0 0 50.46 51.58Z" fill="#24b98a"/><path d="M43.04 44.90A9.7 9.7 0 0 1 47.59 37.55L49.44 40.53A6.2 6.2 0 0 0 46.53 45.23Z" fill="#f0564a"/><path d="M47.59 37.55A9.7 9.7 0 0 1 52.70 36.10L52.70 39.60A6.2 6.2 0 0 0 49.44 40.53Z" fill="#eef1f6"/><path d="M110.30 36.10A9.7 9.7 0 1 1 108.28 55.29L109.01 51.86A6.2 6.2 0 1 0 110.30 39.60Z" fill="#3d78e3"/><path d="M108.28 55.29A9.7 9.7 0 0 1 104.20 53.34L106.40 50.62A6.2 6.2 0 0 0 109.01 51.86Z" fill="#f7b13f"/><path d="M104.20 53.34A9.7 9.7 0 0 1 101.24 42.32L104.51 43.58A6.2 6.2 0 0 0 106.40 50.62Z" fill="#111"/><path d="M101.24 42.32A9.7 9.7 0 0 1 104.20 38.26L106.40 40.98A6.2 6.2 0 0 0 104.51 43.58Z" fill="#24b98a"/><path d="M104.20 38.26A9.7 9.7 0 0 1 107.79 36.43L108.70 39.81A6.2 6.2 0 0 0 106.40 40.98Z" fill="#f0564a"/><path d="M107.79 36.43A9.7 9.7 0 0 1 110.30 36.10L110.30 39.60A6.2 6.2 0 0 0 108.70 39.81Z" fill="#eef1f6"/><rect x="25.10" y="69.50" width="84.80" height="21.00" fill="#fff" rx="0.6"/><rect x="111.70" y="69.50" width="26.60" height="21.00" fill="#fff" rx="0.6"/><rect x="26.80" y="71.40" width="19.00" height="0.90" fill="#5b6070"/><rect x="25.10" y="74.50" width="84.80" height="3.30" fill="#eef0f6"/><rect x="26.50" y="75.70" width="1.50" height="0.90" fill="#5b6070"/><rect x="33.00" y="75.70" width="4.00" height="0.90" fill="#5b6070"/><rect x="44.50" y="75.70" width="15.00" height="0.90" fill="#5b6070"/><rect x="93.50" y="75.70" width="2.50" height="0.90" fill="#5b6070"/><rect x="101.00" y="75.70" width="7.50" height="0.90" fill="#5b6070"/><rect x="26.50" y="80.40" width="3.00" height="0.80" fill="#c9ccd6"/><rect x="33.00" y="80.20" width="4.60" height="1.20" fill="#c9ccd6" rx="0.3"/><rect x="44.50" y="79.50" width="2.80" height="2.80" fill="#fff"/><rect x="44.5" y="79.70" width="2.2" height="2.2" fill="none" stroke="#c9ccd6" stroke-width=".3"/><rect x="49.00" y="80.40" width="32.00" height="0.80" fill="#c9ccd6"/><rect x="93.50" y="80.40" width="4.50" height="0.80" fill="#5b6070"/><rect x="101.00" y="80.40" width="5.00" height="0.80" fill="#4a6cf0"/><rect x="26.50" y="85.60" width="3.00" height="0.80" fill="#c9ccd6"/><rect x="33.00" y="85.40" width="4.60" height="1.20" fill="#6f7bea" rx="0.3"/><rect x="44.50" y="84.70" width="2.80" height="2.80" fill="#fff"/><rect x="44.5" y="84.90" width="2.2" height="2.2" fill="none" stroke="#c9ccd6" stroke-width=".3"/><rect x="49.00" y="85.60" width="25.00" height="0.80" fill="#c9ccd6"/><rect x="93.50" y="85.60" width="4.50" height="0.80" fill="#5b6070"/><rect x="101.00" y="85.60" width="7.50" height="0.80" fill="#4a6cf0"/><rect x="113.30" y="71.40" width="15.00" height="0.90" fill="#5b6070"/><rect x="119.00" y="75.60" width="10.00" height="0.70" fill="#c9ccd6"/><rect x="121.00" y="77.40" width="6.00" height="1.00" fill="#5b6070"/><rect x="113.20" y="81.80" width="12.20" height="1.60" fill="#a9b3ee"/><rect x="125.40" y="81.80" width="8.60" height="1.60" fill="#f7d3a0"/><rect x="134.00" y="81.80" width="2.20" height="1.60" fill="#8a8d96"/><rect x="113.30" y="86.20" width="1.00" height="1.00" fill="#6f7bea"/><rect x="115.20" y="86.30" width="7.00" height="0.70" fill="#c9ccd6"/><rect x="132.00" y="86.30" width="4.00" height="0.70" fill="#c9ccd6"/><rect x="138.60" y="33.00" width="2.40" height="11.50" fill="#8aa2ee" rx="0.8"/></g><rect x=".5" y=".5" width="141.2" height="88.6" rx="3.500" fill="none" stroke="#7d93ee"/></svg>
<svg class="b" style="left:962.2px;top:524.5px;" width="142.2" height="89.6" viewBox="0 0 142.2 89.6"><defs><clipPath id="tc5"><rect x=".5" y=".5" width="141.2" height="88.6" rx="3.500"/></clipPath></defs><g clip-path="url(#tc5)"><rect x="0.00" y="0.00" width="142.20" height="89.60" fill="#f4f5fa"/><rect x="0.00" y="0.00" width="22.60" height="89.60" fill="#323454"/><rect x="4.20" y="3.00" width="2.20" height="2.60" fill="#3f6df0" rx="0.6"/><rect x="7.20" y="3.20" width="11.00" height="2.20" fill="#fff" rx="0.4"/><rect x="2.20" y="9.00" width="3.00" height="0.80" fill="rgba(255,255,255,.72)"/><rect x="2.20" y="12.35" width="1.50" height="1.30" fill="#fff" rx="0.3"/><rect x="4.40" y="12.40" width="5.50" height="1.10" fill="#fff"/><rect x="2.20" y="16.65" width="1.50" height="1.30" fill="rgba(255,255,255,.72)" rx="0.3"/><rect x="4.40" y="16.70" width="6.50" height="1.10" fill="rgba(255,255,255,.72)"/><rect x="2.20" y="20.95" width="1.50" height="1.30" fill="rgba(255,255,255,.72)" rx="0.3"/><rect x="4.40" y="21.00" width="6.80" height="1.10" fill="rgba(255,255,255,.72)"/><rect x="2.20" y="25.25" width="1.50" height="1.30" fill="rgba(255,255,255,.72)" rx="0.3"/><rect x="4.40" y="25.30" width="4.60" height="1.10" fill="rgba(255,255,255,.72)"/><rect x="2.20" y="29.55" width="1.50" height="1.30" fill="rgba(255,255,255,.72)" rx="0.3"/><rect x="4.40" y="29.60" width="7.60" height="1.10" fill="rgba(255,255,255,.72)"/><rect x="2.20" y="33.85" width="1.50" height="1.30" fill="rgba(255,255,255,.72)" rx="0.3"/><rect x="4.40" y="33.90" width="5.20" height="1.10" fill="rgba(255,255,255,.72)"/><rect x="2.20" y="38.15" width="1.50" height="1.30" fill="rgba(255,255,255,.72)" rx="0.3"/><rect x="4.40" y="38.20" width="6.20" height="1.10" fill="rgba(255,255,255,.72)"/><rect x="2.20" y="42.45" width="1.50" height="1.30" fill="rgba(255,255,255,.72)" rx="0.3"/><rect x="4.40" y="42.50" width="5.60" height="1.10" fill="rgba(255,255,255,.72)"/><rect x="2.20" y="46.25" width="1.50" height="1.30" fill="rgba(255,255,255,.72)" rx="0.3"/><rect x="4.40" y="46.30" width="10.50" height="1.10" fill="rgba(255,255,255,.72)"/><rect x="1.20" y="11.50" width="17.00" height="2.90" fill="rgba(255,255,255,.10)" rx="0.6"/><rect x="22.60" y="0.00" width="119.60" height="7.20" fill="#fff"/><rect x="25.80" y="3.30" width="2.20" height="0.90" fill="#5b6070"/><rect x="30.00" y="3.30" width="1.00" height="1.00" fill="#c9ccd6"/><rect x="31.80" y="3.40" width="6.00" height="0.80" fill="#c9ccd6"/><rect x="106.20" y="3.10" width="1.30" height="1.30" fill="#8b90a0" rx="0.4"/><rect x="110.60" y="3.10" width="1.30" height="1.30" fill="#8b90a0" rx="0.4"/><rect x="115.00" y="3.10" width="1.30" height="1.30" fill="#8b90a0" rx="0.4"/><rect x="119.20" y="3.10" width="1.30" height="1.30" fill="#8b90a0" rx="0.4"/><circle cx="126.2" cy="3.700" r="1.600" fill="#111"/><rect x="129.00" y="2.60" width="7.00" height="0.90" fill="#5b6070"/><rect x="129.00" y="4.20" width="6.00" height="0.80" fill="#c9ccd6"/><rect x="25.10" y="9.50" width="5.00" height="1.10" fill="#5b6070"/><rect x="119.60" y="9.50" width="16.50" height="1.00" fill="#c9ccd6"/><rect x="25.10" y="13.60" width="26.60" height="12.20" fill="#fff" rx="0.6"/><rect x="25.10" y="24.90" width="26.60" height="0.90" fill="#a9abb2"/><rect x="27.10" y="15.70" width="9.50" height="0.80" fill="#c9ccd6"/><rect x="27.10" y="18.30" width="2.20" height="1.30" fill="#5b6070"/><rect x="27.10" y="21.80" width="3.60" height="1.00" fill="#5cc9ad"/><rect x="31.30" y="21.90" width="8.50" height="0.80" fill="#c9ccd6"/><rect x="45.50" y="15.00" width="4.20" height="4.20" fill="#d9dade" rx="0.5"/><rect x="54.00" y="13.60" width="26.60" height="12.20" fill="#fff" rx="0.6"/><rect x="54.00" y="24.90" width="26.60" height="0.90" fill="#a6dcc4"/><rect x="56.00" y="15.70" width="9.50" height="0.80" fill="#c9ccd6"/><rect x="56.00" y="18.30" width="2.20" height="1.30" fill="#5b6070"/><rect x="56.00" y="21.80" width="3.60" height="1.00" fill="#5cc9ad"/><rect x="60.20" y="21.90" width="8.50" height="0.80" fill="#c9ccd6"/><rect x="74.40" y="15.00" width="4.20" height="4.20" fill="#d6f0e4" rx="0.5"/><rect x="82.80" y="13.60" width="26.60" height="12.20" fill="#fff" rx="0.6"/><rect x="82.80" y="24.90" width="26.60" height="0.90" fill="#a9b3ee"/><rect x="84.80" y="15.70" width="9.50" height="0.80" fill="#c9ccd6"/><rect x="84.80" y="18.30" width="2.20" height="1.30" fill="#5b6070"/><rect x="84.80" y="21.80" width="3.60" height="1.00" fill="#5cc9ad"/><rect x="89.00" y="21.90" width="8.50" height="0.80" fill="#c9ccd6"/><rect x="103.20" y="15.00" width="4.20" height="4.20" fill="#dfe3fb" rx="0.5"/><rect x="111.70" y="13.60" width="26.60" height="12.20" fill="#fff" rx="0.6"/><rect x="111.70" y="24.90" width="26.60" height="0.90" fill="#a6dcc4"/><rect x="113.70" y="15.70" width="9.50" height="0.80" fill="#c9ccd6"/><rect x="113.70" y="18.30" width="2.20" height="1.30" fill="#5b6070"/><rect x="113.70" y="21.80" width="3.60" height="1.00" fill="#5cc9ad"/><rect x="117.90" y="21.90" width="8.50" height="0.80" fill="#c9ccd6"/><rect x="132.10" y="15.00" width="4.20" height="4.20" fill="#d6f0e4" rx="0.5"/><rect x="25.10" y="27.70" width="55.20" height="40.30" fill="#fff" rx="0.6"/><rect x="26.70" y="29.70" width="11.50" height="0.90" fill="#5b6070"/><rect x="35.70" y="34.30" width="8.00" height="0.70" fill="#c9ccd6"/><rect x="37.70" y="35.60" width="4.00" height="0.70" fill="#c9ccd6"/><rect x="31.70" y="37.80" width="9.00" height="0.70" fill="#c9ccd6"/><rect x="33.95" y="39.10" width="4.50" height="0.70" fill="#c9ccd6"/><rect x="30.20" y="48.00" width="10.00" height="0.70" fill="#c9ccd6"/><rect x="32.70" y="49.30" width="5.00" height="0.70" fill="#c9ccd6"/><rect x="39.20" y="53.10" width="5.00" height="0.70" fill="#c9ccd6"/><rect x="40.45" y="54.40" width="2.50" height="0.70" fill="#c9ccd6"/><rect x="44.70" y="56.40" width="3.50" height="0.70" fill="#c9ccd6"/><rect x="45.58" y="57.70" width="1.75" height="0.70" fill="#c9ccd6"/><rect x="66.20" y="45.00" width="7.50" height="0.70" fill="#c9ccd6"/><rect x="68.08" y="46.30" width="3.75" height="0.70" fill="#c9ccd6"/><rect x="29.70" y="61.60" width="1.60" height="1.00" fill="#62bf8d" rx="0.3"/><rect x="31.90" y="61.70" width="6.50" height="0.70" fill="#c9ccd6"/><rect x="40.50" y="61.60" width="1.60" height="1.00" fill="#f7b13f" rx="0.3"/><rect x="42.70" y="61.70" width="1.80" height="0.70" fill="#c9ccd6"/><rect x="46.00" y="61.60" width="1.60" height="1.00" fill="#1d2352" rx="0.3"/><rect x="48.20" y="61.70" width="2.80" height="0.70" fill="#c9ccd6"/><rect x="53.40" y="61.60" width="1.60" height="1.00" fill="#5cc9ad" rx="0.3"/><rect x="55.60" y="61.70" width="9.50" height="0.70" fill="#c9ccd6"/><rect x="65.90" y="61.60" width="1.60" height="1.00" fill="#f09797" rx="0.3"/><rect x="68.10" y="61.70" width="9.00" height="0.70" fill="#c9ccd6"/><rect x="31.70" y="63.70" width="8.00" height="0.70" fill="#c9ccd6"/><rect x="82.80" y="27.70" width="55.20" height="40.30" fill="#fff" rx="0.6"/><rect x="84.40" y="29.70" width="11.50" height="0.90" fill="#5b6070"/><rect x="93.30" y="34.30" width="8.00" height="0.70" fill="#c9ccd6"/><rect x="95.30" y="35.60" width="4.00" height="0.70" fill="#c9ccd6"/><rect x="89.30" y="37.80" width="9.00" height="0.70" fill="#c9ccd6"/><rect x="91.55" y="39.10" width="4.50" height="0.70" fill="#c9ccd6"/><rect x="87.80" y="48.00" width="10.00" height="0.70" fill="#c9ccd6"/><rect x="90.30" y="49.30" width="5.00" height="0.70" fill="#c9ccd6"/><rect x="96.80" y="53.10" width="5.00" height="0.70" fill="#c9ccd6"/><rect x="98.05" y="54.40" width="2.50" height="0.70" fill="#c9ccd6"/><rect x="102.30" y="56.40" width="3.50" height="0.70" fill="#c9ccd6"/><rect x="103.17" y="57.70" width="1.75" height="0.70" fill="#c9ccd6"/><rect x="123.80" y="45.00" width="7.50" height="0.70" fill="#c9ccd6"/><rect x="125.67" y="46.30" width="3.75" height="0.70" fill="#c9ccd6"/><rect x="87.30" y="61.60" width="1.60" height="1.00" fill="#62bf8d" rx="0.3"/><rect x="89.50" y="61.70" width="6.50" height="0.70" fill="#c9ccd6"/><rect x="98.10" y="61.60" width="1.60" height="1.00" fill="#f7b13f" rx="0.3"/><rect x="100.30" y="61.70" width="1.80" height="0.70" fill="#c9ccd6"/><rect x="103.60" y="61.60" width="1.60" height="1.00" fill="#1d2352" rx="0.3"/><rect x="105.80" y="61.70" width="2.80" height="0.70" fill="#c9ccd6"/><rect x="111.00" y="61.60" width="1.60" height="1.00" fill="#5cc9ad" rx="0.3"/><rect x="113.20" y="61.70" width="9.50" height="0.70" fill="#c9ccd6"/><rect x="123.50" y="61.60" width="1.60" height="1.00" fill="#f09797" rx="0.3"/><rect x="125.70" y="61.70" width="9.00" height="0.70" fill="#c9ccd6"/><rect x="89.30" y="63.70" width="8.00" height="0.70" fill="#c9ccd6"/><path d="M52.70 36.10A9.7 9.7 0 0 1 57.81 54.05L55.96 51.07A6.2 6.2 0 0 0 52.70 39.60Z" fill="#62bf8d"/><path d="M57.81 54.05A9.7 9.7 0 0 1 54.48 55.33L53.84 51.89A6.2 6.2 0 0 0 55.96 51.07Z" fill="#f7b13f"/><path d="M54.48 55.33A9.7 9.7 0 0 1 49.20 54.84L50.46 51.58A6.2 6.2 0 0 0 53.84 51.89Z" fill="#1d2352"/><path d="M49.20 54.84A9.7 9.7 0 0 1 43.04 44.90L46.53 45.23A6.2 6.2 0 0 0 50.46 51.58Z" fill="#5cc9ad"/><path d="M43.04 44.90A9.7 9.7 0 0 1 47.59 37.55L49.44 40.53A6.2 6.2 0 0 0 46.53 45.23Z" fill="#f09797"/><path d="M47.59 37.55A9.7 9.7 0 0 1 52.70 36.10L52.70 39.60A6.2 6.2 0 0 0 49.44 40.53Z" fill="#eef1f6"/><path d="M110.30 36.10A9.7 9.7 0 1 1 108.28 55.29L109.01 51.86A6.2 6.2 0 1 0 110.30 39.60Z" fill="#62bf8d"/><path d="M108.28 55.29A9.7 9.7 0 0 1 104.20 53.34L106.40 50.62A6.2 6.2 0 0 0 109.01 51.86Z" fill="#f7b13f"/><path d="M104.20 53.34A9.7 9.7 0 0 1 101.24 42.32L104.51 43.58A6.2 6.2 0 0 0 106.40 50.62Z" fill="#1d2352"/><path d="M101.24 42.32A9.7 9.7 0 0 1 104.20 38.26L106.40 40.98A6.2 6.2 0 0 0 104.51 43.58Z" fill="#5cc9ad"/><path d="M104.20 38.26A9.7 9.7 0 0 1 107.79 36.43L108.70 39.81A6.2 6.2 0 0 0 106.40 40.98Z" fill="#f09797"/><path d="M107.79 36.43A9.7 9.7 0 0 1 110.30 36.10L110.30 39.60A6.2 6.2 0 0 0 108.70 39.81Z" fill="#eef1f6"/><rect x="25.10" y="69.50" width="84.80" height="21.00" fill="#fff" rx="0.6"/><rect x="111.70" y="69.50" width="26.60" height="21.00" fill="#fff" rx="0.6"/><rect x="26.80" y="71.40" width="19.00" height="0.90" fill="#5b6070"/><rect x="25.10" y="74.50" width="84.80" height="3.30" fill="#eef0f6"/><rect x="26.50" y="75.70" width="1.50" height="0.90" fill="#5b6070"/><rect x="33.00" y="75.70" width="4.00" height="0.90" fill="#5b6070"/><rect x="44.50" y="75.70" width="15.00" height="0.90" fill="#5b6070"/><rect x="93.50" y="75.70" width="2.50" height="0.90" fill="#5b6070"/><rect x="101.00" y="75.70" width="7.50" height="0.90" fill="#5b6070"/><rect x="26.50" y="80.40" width="3.00" height="0.80" fill="#c9ccd6"/><rect x="33.00" y="80.20" width="4.60" height="1.20" fill="#c9ccd6" rx="0.3"/><rect x="44.50" y="79.50" width="2.80" height="2.80" fill="#fff"/><rect x="44.5" y="79.70" width="2.2" height="2.2" fill="none" stroke="#c9ccd6" stroke-width=".3"/><rect x="49.00" y="80.40" width="32.00" height="0.80" fill="#c9ccd6"/><rect x="93.50" y="80.40" width="4.50" height="0.80" fill="#5b6070"/><rect x="101.00" y="80.40" width="5.00" height="0.80" fill="#4a6cf0"/><rect x="26.50" y="85.60" width="3.00" height="0.80" fill="#c9ccd6"/><rect x="33.00" y="85.40" width="4.60" height="1.20" fill="#6f7bea" rx="0.3"/><rect x="44.50" y="84.70" width="2.80" height="2.80" fill="#fff"/><rect x="44.5" y="84.90" width="2.2" height="2.2" fill="none" stroke="#c9ccd6" stroke-width=".3"/><rect x="49.00" y="85.60" width="25.00" height="0.80" fill="#c9ccd6"/><rect x="93.50" y="85.60" width="4.50" height="0.80" fill="#5b6070"/><rect x="101.00" y="85.60" width="7.50" height="0.80" fill="#4a6cf0"/><rect x="113.30" y="71.40" width="15.00" height="0.90" fill="#5b6070"/><rect x="119.00" y="75.60" width="10.00" height="0.70" fill="#c9ccd6"/><rect x="121.00" y="77.40" width="6.00" height="1.00" fill="#5b6070"/><rect x="113.20" y="81.80" width="12.20" height="1.60" fill="#a9b3ee"/><rect x="125.40" y="81.80" width="8.60" height="1.60" fill="#f7d3a0"/><rect x="134.00" y="81.80" width="2.20" height="1.60" fill="#8a8d96"/><rect x="113.30" y="86.20" width="1.00" height="1.00" fill="#6f7bea"/><rect x="115.20" y="86.30" width="7.00" height="0.70" fill="#c9ccd6"/><rect x="132.00" y="86.30" width="4.00" height="0.70" fill="#c9ccd6"/><rect x="138.60" y="33.00" width="2.40" height="11.50" fill="#8fd5e8" rx="0.8"/></g><rect x=".5" y=".5" width="141.2" height="88.6" rx="3.500" fill="none" stroke="#e8ebf6"/></svg>
<svg class="b" style="left:1118px;top:524.5px;" width="142.2" height="89.6" viewBox="0 0 142.2 89.6"><defs><clipPath id="tc6"><rect x=".5" y=".5" width="141.2" height="88.6" rx="3.500"/></clipPath></defs><g clip-path="url(#tc6)"><rect x="0.00" y="0.00" width="142.20" height="89.60" fill="#f4f5fa"/><rect x="0.00" y="0.00" width="22.60" height="89.60" fill="#0e6e7e"/><rect x="4.20" y="3.00" width="2.20" height="2.60" fill="#3f6df0" rx="0.6"/><rect x="7.20" y="3.20" width="11.00" height="2.20" fill="#fff" rx="0.4"/><rect x="2.20" y="9.00" width="3.00" height="0.80" fill="rgba(255,255,255,.72)"/><rect x="2.20" y="12.35" width="1.50" height="1.30" fill="#fff" rx="0.3"/><rect x="4.40" y="12.40" width="5.50" height="1.10" fill="#fff"/><rect x="2.20" y="16.65" width="1.50" height="1.30" fill="rgba(255,255,255,.72)" rx="0.3"/><rect x="4.40" y="16.70" width="6.50" height="1.10" fill="rgba(255,255,255,.72)"/><rect x="2.20" y="20.95" width="1.50" height="1.30" fill="rgba(255,255,255,.72)" rx="0.3"/><rect x="4.40" y="21.00" width="6.80" height="1.10" fill="rgba(255,255,255,.72)"/><rect x="2.20" y="25.25" width="1.50" height="1.30" fill="rgba(255,255,255,.72)" rx="0.3"/><rect x="4.40" y="25.30" width="4.60" height="1.10" fill="rgba(255,255,255,.72)"/><rect x="2.20" y="29.55" width="1.50" height="1.30" fill="rgba(255,255,255,.72)" rx="0.3"/><rect x="4.40" y="29.60" width="7.60" height="1.10" fill="rgba(255,255,255,.72)"/><rect x="2.20" y="33.85" width="1.50" height="1.30" fill="rgba(255,255,255,.72)" rx="0.3"/><rect x="4.40" y="33.90" width="5.20" height="1.10" fill="rgba(255,255,255,.72)"/><rect x="2.20" y="38.15" width="1.50" height="1.30" fill="rgba(255,255,255,.72)" rx="0.3"/><rect x="4.40" y="38.20" width="6.20" height="1.10" fill="rgba(255,255,255,.72)"/><rect x="2.20" y="42.45" width="1.50" height="1.30" fill="rgba(255,255,255,.72)" rx="0.3"/><rect x="4.40" y="42.50" width="5.60" height="1.10" fill="rgba(255,255,255,.72)"/><rect x="2.20" y="46.25" width="1.50" height="1.30" fill="rgba(255,255,255,.72)" rx="0.3"/><rect x="4.40" y="46.30" width="10.50" height="1.10" fill="rgba(255,255,255,.72)"/><rect x="1.20" y="11.50" width="17.00" height="2.90" fill="rgba(255,255,255,.10)" rx="0.6"/><rect x="22.60" y="0.00" width="119.60" height="7.20" fill="#fff"/><rect x="25.80" y="3.30" width="2.20" height="0.90" fill="#5b6070"/><rect x="30.00" y="3.30" width="1.00" height="1.00" fill="#c9ccd6"/><rect x="31.80" y="3.40" width="6.00" height="0.80" fill="#c9ccd6"/><rect x="106.20" y="3.10" width="1.30" height="1.30" fill="#8b90a0" rx="0.4"/><rect x="110.60" y="3.10" width="1.30" height="1.30" fill="#8b90a0" rx="0.4"/><rect x="115.00" y="3.10" width="1.30" height="1.30" fill="#8b90a0" rx="0.4"/><rect x="119.20" y="3.10" width="1.30" height="1.30" fill="#8b90a0" rx="0.4"/><circle cx="126.2" cy="3.700" r="1.600" fill="#111"/><rect x="129.00" y="2.60" width="7.00" height="0.90" fill="#5b6070"/><rect x="129.00" y="4.20" width="6.00" height="0.80" fill="#c9ccd6"/><rect x="25.10" y="9.50" width="5.00" height="1.10" fill="#5b6070"/><rect x="119.60" y="9.50" width="16.50" height="1.00" fill="#c9ccd6"/><rect x="25.10" y="13.60" width="26.60" height="12.20" fill="#fff" rx="0.6"/><rect x="25.10" y="24.90" width="26.60" height="0.90" fill="#a9abb2"/><rect x="27.10" y="15.70" width="9.50" height="0.80" fill="#c9ccd6"/><rect x="27.10" y="18.30" width="2.20" height="1.30" fill="#5b6070"/><rect x="27.10" y="21.80" width="3.60" height="1.00" fill="#24b98a"/><rect x="31.30" y="21.90" width="8.50" height="0.80" fill="#c9ccd6"/><rect x="45.50" y="15.00" width="4.20" height="4.20" fill="#d9dade" rx="0.5"/><rect x="54.00" y="13.60" width="26.60" height="12.20" fill="#fff" rx="0.6"/><rect x="54.00" y="24.90" width="26.60" height="0.90" fill="#a6dcc4"/><rect x="56.00" y="15.70" width="9.50" height="0.80" fill="#c9ccd6"/><rect x="56.00" y="18.30" width="2.20" height="1.30" fill="#5b6070"/><rect x="56.00" y="21.80" width="3.60" height="1.00" fill="#24b98a"/><rect x="60.20" y="21.90" width="8.50" height="0.80" fill="#c9ccd6"/><rect x="74.40" y="15.00" width="4.20" height="4.20" fill="#d6f0e4" rx="0.5"/><rect x="82.80" y="13.60" width="26.60" height="12.20" fill="#fff" rx="0.6"/><rect x="82.80" y="24.90" width="26.60" height="0.90" fill="#a9b3ee"/><rect x="84.80" y="15.70" width="9.50" height="0.80" fill="#c9ccd6"/><rect x="84.80" y="18.30" width="2.20" height="1.30" fill="#5b6070"/><rect x="84.80" y="21.80" width="3.60" height="1.00" fill="#24b98a"/><rect x="89.00" y="21.90" width="8.50" height="0.80" fill="#c9ccd6"/><rect x="103.20" y="15.00" width="4.20" height="4.20" fill="#dfe3fb" rx="0.5"/><rect x="111.70" y="13.60" width="26.60" height="12.20" fill="#fff" rx="0.6"/><rect x="111.70" y="24.90" width="26.60" height="0.90" fill="#a6dcc4"/><rect x="113.70" y="15.70" width="9.50" height="0.80" fill="#c9ccd6"/><rect x="113.70" y="18.30" width="2.20" height="1.30" fill="#5b6070"/><rect x="113.70" y="21.80" width="3.60" height="1.00" fill="#24b98a"/><rect x="117.90" y="21.90" width="8.50" height="0.80" fill="#c9ccd6"/><rect x="132.10" y="15.00" width="4.20" height="4.20" fill="#d6f0e4" rx="0.5"/><rect x="25.10" y="27.70" width="55.20" height="40.30" fill="#fff" rx="0.6"/><rect x="26.70" y="29.70" width="11.50" height="0.90" fill="#5b6070"/><rect x="35.70" y="34.30" width="8.00" height="0.70" fill="#c9ccd6"/><rect x="37.70" y="35.60" width="4.00" height="0.70" fill="#c9ccd6"/><rect x="31.70" y="37.80" width="9.00" height="0.70" fill="#c9ccd6"/><rect x="33.95" y="39.10" width="4.50" height="0.70" fill="#c9ccd6"/><rect x="30.20" y="48.00" width="10.00" height="0.70" fill="#c9ccd6"/><rect x="32.70" y="49.30" width="5.00" height="0.70" fill="#c9ccd6"/><rect x="39.20" y="53.10" width="5.00" height="0.70" fill="#c9ccd6"/><rect x="40.45" y="54.40" width="2.50" height="0.70" fill="#c9ccd6"/><rect x="44.70" y="56.40" width="3.50" height="0.70" fill="#c9ccd6"/><rect x="45.58" y="57.70" width="1.75" height="0.70" fill="#c9ccd6"/><rect x="66.20" y="45.00" width="7.50" height="0.70" fill="#c9ccd6"/><rect x="68.08" y="46.30" width="3.75" height="0.70" fill="#c9ccd6"/><rect x="29.70" y="61.60" width="1.60" height="1.00" fill="#1bb9d8" rx="0.3"/><rect x="31.90" y="61.70" width="6.50" height="0.70" fill="#c9ccd6"/><rect x="40.50" y="61.60" width="1.60" height="1.00" fill="#f9cb2e" rx="0.3"/><rect x="42.70" y="61.70" width="1.80" height="0.70" fill="#c9ccd6"/><rect x="46.00" y="61.60" width="1.60" height="1.00" fill="#1d2352" rx="0.3"/><rect x="48.20" y="61.70" width="2.80" height="0.70" fill="#c9ccd6"/><rect x="53.40" y="61.60" width="1.60" height="1.00" fill="#24b98a" rx="0.3"/><rect x="55.60" y="61.70" width="9.50" height="0.70" fill="#c9ccd6"/><rect x="65.90" y="61.60" width="1.60" height="1.00" fill="#f0564a" rx="0.3"/><rect x="68.10" y="61.70" width="9.00" height="0.70" fill="#c9ccd6"/><rect x="31.70" y="63.70" width="8.00" height="0.70" fill="#c9ccd6"/><rect x="82.80" y="27.70" width="55.20" height="40.30" fill="#fff" rx="0.6"/><rect x="84.40" y="29.70" width="11.50" height="0.90" fill="#5b6070"/><rect x="93.30" y="34.30" width="8.00" height="0.70" fill="#c9ccd6"/><rect x="95.30" y="35.60" width="4.00" height="0.70" fill="#c9ccd6"/><rect x="89.30" y="37.80" width="9.00" height="0.70" fill="#c9ccd6"/><rect x="91.55" y="39.10" width="4.50" height="0.70" fill="#c9ccd6"/><rect x="87.80" y="48.00" width="10.00" height="0.70" fill="#c9ccd6"/><rect x="90.30" y="49.30" width="5.00" height="0.70" fill="#c9ccd6"/><rect x="96.80" y="53.10" width="5.00" height="0.70" fill="#c9ccd6"/><rect x="98.05" y="54.40" width="2.50" height="0.70" fill="#c9ccd6"/><rect x="102.30" y="56.40" width="3.50" height="0.70" fill="#c9ccd6"/><rect x="103.17" y="57.70" width="1.75" height="0.70" fill="#c9ccd6"/><rect x="123.80" y="45.00" width="7.50" height="0.70" fill="#c9ccd6"/><rect x="125.67" y="46.30" width="3.75" height="0.70" fill="#c9ccd6"/><rect x="87.30" y="61.60" width="1.60" height="1.00" fill="#1bb9d8" rx="0.3"/><rect x="89.50" y="61.70" width="6.50" height="0.70" fill="#c9ccd6"/><rect x="98.10" y="61.60" width="1.60" height="1.00" fill="#f9cb2e" rx="0.3"/><rect x="100.30" y="61.70" width="1.80" height="0.70" fill="#c9ccd6"/><rect x="103.60" y="61.60" width="1.60" height="1.00" fill="#1d2352" rx="0.3"/><rect x="105.80" y="61.70" width="2.80" height="0.70" fill="#c9ccd6"/><rect x="111.00" y="61.60" width="1.60" height="1.00" fill="#24b98a" rx="0.3"/><rect x="113.20" y="61.70" width="9.50" height="0.70" fill="#c9ccd6"/><rect x="123.50" y="61.60" width="1.60" height="1.00" fill="#f0564a" rx="0.3"/><rect x="125.70" y="61.70" width="9.00" height="0.70" fill="#c9ccd6"/><rect x="89.30" y="63.70" width="8.00" height="0.70" fill="#c9ccd6"/><path d="M52.70 36.10A9.7 9.7 0 0 1 57.81 54.05L55.96 51.07A6.2 6.2 0 0 0 52.70 39.60Z" fill="#1bb9d8"/><path d="M57.81 54.05A9.7 9.7 0 0 1 54.48 55.33L53.84 51.89A6.2 6.2 0 0 0 55.96 51.07Z" fill="#f9cb2e"/><path d="M54.48 55.33A9.7 9.7 0 0 1 49.20 54.84L50.46 51.58A6.2 6.2 0 0 0 53.84 51.89Z" fill="#1d2352"/><path d="M49.20 54.84A9.7 9.7 0 0 1 43.04 44.90L46.53 45.23A6.2 6.2 0 0 0 50.46 51.58Z" fill="#24b98a"/><path d="M43.04 44.90A9.7 9.7 0 0 1 47.59 37.55L49.44 40.53A6.2 6.2 0 0 0 46.53 45.23Z" fill="#f0564a"/><path d="M47.59 37.55A9.7 9.7 0 0 1 52.70 36.10L52.70 39.60A6.2 6.2 0 0 0 49.44 40.53Z" fill="#eef1f6"/><path d="M110.30 36.10A9.7 9.7 0 1 1 108.28 55.29L109.01 51.86A6.2 6.2 0 1 0 110.30 39.60Z" fill="#1bb9d8"/><path d="M108.28 55.29A9.7 9.7 0 0 1 104.20 53.34L106.40 50.62A6.2 6.2 0 0 0 109.01 51.86Z" fill="#f9cb2e"/><path d="M104.20 53.34A9.7 9.7 0 0 1 101.24 42.32L104.51 43.58A6.2 6.2 0 0 0 106.40 50.62Z" fill="#1d2352"/><path d="M101.24 42.32A9.7 9.7 0 0 1 104.20 38.26L106.40 40.98A6.2 6.2 0 0 0 104.51 43.58Z" fill="#24b98a"/><path d="M104.20 38.26A9.7 9.7 0 0 1 107.79 36.43L108.70 39.81A6.2 6.2 0 0 0 106.40 40.98Z" fill="#f0564a"/><path d="M107.79 36.43A9.7 9.7 0 0 1 110.30 36.10L110.30 39.60A6.2 6.2 0 0 0 108.70 39.81Z" fill="#eef1f6"/><rect x="25.10" y="69.50" width="84.80" height="21.00" fill="#fff" rx="0.6"/><rect x="111.70" y="69.50" width="26.60" height="21.00" fill="#fff" rx="0.6"/><rect x="26.80" y="71.40" width="19.00" height="0.90" fill="#5b6070"/><rect x="25.10" y="74.50" width="84.80" height="3.30" fill="#eef0f6"/><rect x="26.50" y="75.70" width="1.50" height="0.90" fill="#5b6070"/><rect x="33.00" y="75.70" width="4.00" height="0.90" fill="#5b6070"/><rect x="44.50" y="75.70" width="15.00" height="0.90" fill="#5b6070"/><rect x="93.50" y="75.70" width="2.50" height="0.90" fill="#5b6070"/><rect x="101.00" y="75.70" width="7.50" height="0.90" fill="#5b6070"/><rect x="26.50" y="80.40" width="3.00" height="0.80" fill="#c9ccd6"/><rect x="33.00" y="80.20" width="4.60" height="1.20" fill="#c9ccd6" rx="0.3"/><rect x="44.50" y="79.50" width="2.80" height="2.80" fill="#fff"/><rect x="44.5" y="79.70" width="2.2" height="2.2" fill="none" stroke="#c9ccd6" stroke-width=".3"/><rect x="49.00" y="80.40" width="32.00" height="0.80" fill="#c9ccd6"/><rect x="93.50" y="80.40" width="4.50" height="0.80" fill="#5b6070"/><rect x="101.00" y="80.40" width="5.00" height="0.80" fill="#4a6cf0"/><rect x="26.50" y="85.60" width="3.00" height="0.80" fill="#c9ccd6"/><rect x="33.00" y="85.40" width="4.60" height="1.20" fill="#6f7bea" rx="0.3"/><rect x="44.50" y="84.70" width="2.80" height="2.80" fill="#fff"/><rect x="44.5" y="84.90" width="2.2" height="2.2" fill="none" stroke="#c9ccd6" stroke-width=".3"/><rect x="49.00" y="85.60" width="25.00" height="0.80" fill="#c9ccd6"/><rect x="93.50" y="85.60" width="4.50" height="0.80" fill="#5b6070"/><rect x="101.00" y="85.60" width="7.50" height="0.80" fill="#4a6cf0"/><rect x="113.30" y="71.40" width="15.00" height="0.90" fill="#5b6070"/><rect x="119.00" y="75.60" width="10.00" height="0.70" fill="#c9ccd6"/><rect x="121.00" y="77.40" width="6.00" height="1.00" fill="#5b6070"/><rect x="113.20" y="81.80" width="12.20" height="1.60" fill="#a9b3ee"/><rect x="125.40" y="81.80" width="8.60" height="1.60" fill="#f7d3a0"/><rect x="134.00" y="81.80" width="2.20" height="1.60" fill="#8a8d96"/><rect x="113.30" y="86.20" width="1.00" height="1.00" fill="#6f7bea"/><rect x="115.20" y="86.30" width="7.00" height="0.70" fill="#c9ccd6"/><rect x="132.00" y="86.30" width="4.00" height="0.70" fill="#c9ccd6"/><rect x="138.60" y="33.00" width="2.40" height="11.50" fill="#8fd5e8" rx="0.8"/></g><rect x=".5" y=".5" width="141.2" height="88.6" rx="3.500" fill="none" stroke="#e8ebf6"/></svg>
<svg class="b" style="left:962.2px;top:709.8px;" width="142.2" height="89.6" viewBox="0 0 142.2 89.6"><defs><clipPath id="tc7"><rect x=".5" y=".5" width="141.2" height="88.6" rx="3.500"/></clipPath></defs><g clip-path="url(#tc7)"><rect x="0.00" y="0.00" width="142.20" height="89.60" fill="#f4f5fa"/><rect x="0.00" y="0.00" width="22.60" height="89.60" fill="#15171c"/><rect x="4.20" y="3.00" width="2.20" height="2.60" fill="#3f6df0" rx="0.6"/><rect x="7.20" y="3.20" width="11.00" height="2.20" fill="#fff" rx="0.4"/><rect x="2.20" y="9.00" width="3.00" height="0.80" fill="rgba(255,255,255,.72)"/><rect x="2.20" y="12.35" width="1.50" height="1.30" fill="#fff" rx="0.3"/><rect x="4.40" y="12.40" width="5.50" height="1.10" fill="#fff"/><rect x="2.20" y="16.65" width="1.50" height="1.30" fill="rgba(255,255,255,.72)" rx="0.3"/><rect x="4.40" y="16.70" width="6.50" height="1.10" fill="rgba(255,255,255,.72)"/><rect x="2.20" y="20.95" width="1.50" height="1.30" fill="rgba(255,255,255,.72)" rx="0.3"/><rect x="4.40" y="21.00" width="6.80" height="1.10" fill="rgba(255,255,255,.72)"/><rect x="2.20" y="25.25" width="1.50" height="1.30" fill="rgba(255,255,255,.72)" rx="0.3"/><rect x="4.40" y="25.30" width="4.60" height="1.10" fill="rgba(255,255,255,.72)"/><rect x="2.20" y="29.55" width="1.50" height="1.30" fill="rgba(255,255,255,.72)" rx="0.3"/><rect x="4.40" y="29.60" width="7.60" height="1.10" fill="rgba(255,255,255,.72)"/><rect x="2.20" y="33.85" width="1.50" height="1.30" fill="rgba(255,255,255,.72)" rx="0.3"/><rect x="4.40" y="33.90" width="5.20" height="1.10" fill="rgba(255,255,255,.72)"/><rect x="2.20" y="38.15" width="1.50" height="1.30" fill="rgba(255,255,255,.72)" rx="0.3"/><rect x="4.40" y="38.20" width="6.20" height="1.10" fill="rgba(255,255,255,.72)"/><rect x="2.20" y="42.45" width="1.50" height="1.30" fill="rgba(255,255,255,.72)" rx="0.3"/><rect x="4.40" y="42.50" width="5.60" height="1.10" fill="rgba(255,255,255,.72)"/><rect x="2.20" y="46.25" width="1.50" height="1.30" fill="rgba(255,255,255,.72)" rx="0.3"/><rect x="4.40" y="46.30" width="10.50" height="1.10" fill="rgba(255,255,255,.72)"/><rect x="1.20" y="11.50" width="17.00" height="2.90" fill="rgba(255,255,255,.10)" rx="0.6"/><rect x="22.60" y="0.00" width="119.60" height="7.20" fill="#fff"/><rect x="25.80" y="3.30" width="2.20" height="0.90" fill="#5b6070"/><rect x="30.00" y="3.30" width="1.00" height="1.00" fill="#c9ccd6"/><rect x="31.80" y="3.40" width="6.00" height="0.80" fill="#c9ccd6"/><rect x="106.20" y="3.10" width="1.30" height="1.30" fill="#8b90a0" rx="0.4"/><rect x="110.60" y="3.10" width="1.30" height="1.30" fill="#8b90a0" rx="0.4"/><rect x="115.00" y="3.10" width="1.30" height="1.30" fill="#8b90a0" rx="0.4"/><rect x="119.20" y="3.10" width="1.30" height="1.30" fill="#8b90a0" rx="0.4"/><circle cx="126.2" cy="3.700" r="1.600" fill="#111"/><rect x="129.00" y="2.60" width="7.00" height="0.90" fill="#5b6070"/><rect x="129.00" y="4.20" width="6.00" height="0.80" fill="#c9ccd6"/><rect x="25.10" y="9.50" width="5.00" height="1.10" fill="#5b6070"/><rect x="119.60" y="9.50" width="16.50" height="1.00" fill="#c9ccd6"/><rect x="25.10" y="13.60" width="26.60" height="12.20" fill="#fff" rx="0.6"/><rect x="25.10" y="24.90" width="26.60" height="0.90" fill="#a9abb2"/><rect x="27.10" y="15.70" width="9.50" height="0.80" fill="#c9ccd6"/><rect x="27.10" y="18.30" width="2.20" height="1.30" fill="#5b6070"/><rect x="27.10" y="21.80" width="3.60" height="1.00" fill="#2dba6e"/><rect x="31.30" y="21.90" width="8.50" height="0.80" fill="#c9ccd6"/><rect x="45.50" y="15.00" width="4.20" height="4.20" fill="#d9dade" rx="0.5"/><rect x="54.00" y="13.60" width="26.60" height="12.20" fill="#fff" rx="0.6"/><rect x="54.00" y="24.90" width="26.60" height="0.90" fill="#a6dcc4"/><rect x="56.00" y="15.70" width="9.50" height="0.80" fill="#c9ccd6"/><rect x="56.00" y="18.30" width="2.20" height="1.30" fill="#5b6070"/><rect x="56.00" y="21.80" width="3.60" height="1.00" fill="#2dba6e"/><rect x="60.20" y="21.90" width="8.50" height="0.80" fill="#c9ccd6"/><rect x="74.40" y="15.00" width="4.20" height="4.20" fill="#d6f0e4" rx="0.5"/><rect x="82.80" y="13.60" width="26.60" height="12.20" fill="#fff" rx="0.6"/><rect x="82.80" y="24.90" width="26.60" height="0.90" fill="#a9b3ee"/><rect x="84.80" y="15.70" width="9.50" height="0.80" fill="#c9ccd6"/><rect x="84.80" y="18.30" width="2.20" height="1.30" fill="#5b6070"/><rect x="84.80" y="21.80" width="3.60" height="1.00" fill="#2dba6e"/><rect x="89.00" y="21.90" width="8.50" height="0.80" fill="#c9ccd6"/><rect x="103.20" y="15.00" width="4.20" height="4.20" fill="#dfe3fb" rx="0.5"/><rect x="111.70" y="13.60" width="26.60" height="12.20" fill="#fff" rx="0.6"/><rect x="111.70" y="24.90" width="26.60" height="0.90" fill="#a6dcc4"/><rect x="113.70" y="15.70" width="9.50" height="0.80" fill="#c9ccd6"/><rect x="113.70" y="18.30" width="2.20" height="1.30" fill="#5b6070"/><rect x="113.70" y="21.80" width="3.60" height="1.00" fill="#2dba6e"/><rect x="117.90" y="21.90" width="8.50" height="0.80" fill="#c9ccd6"/><rect x="132.10" y="15.00" width="4.20" height="4.20" fill="#d6f0e4" rx="0.5"/><rect x="25.10" y="27.70" width="55.20" height="40.30" fill="#fff" rx="0.6"/><rect x="26.70" y="29.70" width="11.50" height="0.90" fill="#5b6070"/><rect x="35.70" y="34.30" width="8.00" height="0.70" fill="#c9ccd6"/><rect x="37.70" y="35.60" width="4.00" height="0.70" fill="#c9ccd6"/><rect x="31.70" y="37.80" width="9.00" height="0.70" fill="#c9ccd6"/><rect x="33.95" y="39.10" width="4.50" height="0.70" fill="#c9ccd6"/><rect x="30.20" y="48.00" width="10.00" height="0.70" fill="#c9ccd6"/><rect x="32.70" y="49.30" width="5.00" height="0.70" fill="#c9ccd6"/><rect x="39.20" y="53.10" width="5.00" height="0.70" fill="#c9ccd6"/><rect x="40.45" y="54.40" width="2.50" height="0.70" fill="#c9ccd6"/><rect x="44.70" y="56.40" width="3.50" height="0.70" fill="#c9ccd6"/><rect x="45.58" y="57.70" width="1.75" height="0.70" fill="#c9ccd6"/><rect x="66.20" y="45.00" width="7.50" height="0.70" fill="#c9ccd6"/><rect x="68.08" y="46.30" width="3.75" height="0.70" fill="#c9ccd6"/><rect x="29.70" y="61.60" width="1.60" height="1.00" fill="#2f55e8" rx="0.3"/><rect x="31.90" y="61.70" width="6.50" height="0.70" fill="#c9ccd6"/><rect x="40.50" y="61.60" width="1.60" height="1.00" fill="#f7b13f" rx="0.3"/><rect x="42.70" y="61.70" width="1.80" height="0.70" fill="#c9ccd6"/><rect x="46.00" y="61.60" width="1.60" height="1.00" fill="#111" rx="0.3"/><rect x="48.20" y="61.70" width="2.80" height="0.70" fill="#c9ccd6"/><rect x="53.40" y="61.60" width="1.60" height="1.00" fill="#2dba6e" rx="0.3"/><rect x="55.60" y="61.70" width="9.50" height="0.70" fill="#c9ccd6"/><rect x="65.90" y="61.60" width="1.60" height="1.00" fill="#f0564a" rx="0.3"/><rect x="68.10" y="61.70" width="9.00" height="0.70" fill="#c9ccd6"/><rect x="31.70" y="63.70" width="8.00" height="0.70" fill="#c9ccd6"/><rect x="82.80" y="27.70" width="55.20" height="40.30" fill="#fff" rx="0.6"/><rect x="84.40" y="29.70" width="11.50" height="0.90" fill="#5b6070"/><rect x="93.30" y="34.30" width="8.00" height="0.70" fill="#c9ccd6"/><rect x="95.30" y="35.60" width="4.00" height="0.70" fill="#c9ccd6"/><rect x="89.30" y="37.80" width="9.00" height="0.70" fill="#c9ccd6"/><rect x="91.55" y="39.10" width="4.50" height="0.70" fill="#c9ccd6"/><rect x="87.80" y="48.00" width="10.00" height="0.70" fill="#c9ccd6"/><rect x="90.30" y="49.30" width="5.00" height="0.70" fill="#c9ccd6"/><rect x="96.80" y="53.10" width="5.00" height="0.70" fill="#c9ccd6"/><rect x="98.05" y="54.40" width="2.50" height="0.70" fill="#c9ccd6"/><rect x="102.30" y="56.40" width="3.50" height="0.70" fill="#c9ccd6"/><rect x="103.17" y="57.70" width="1.75" height="0.70" fill="#c9ccd6"/><rect x="123.80" y="45.00" width="7.50" height="0.70" fill="#c9ccd6"/><rect x="125.67" y="46.30" width="3.75" height="0.70" fill="#c9ccd6"/><rect x="87.30" y="61.60" width="1.60" height="1.00" fill="#2f55e8" rx="0.3"/><rect x="89.50" y="61.70" width="6.50" height="0.70" fill="#c9ccd6"/><rect x="98.10" y="61.60" width="1.60" height="1.00" fill="#f7b13f" rx="0.3"/><rect x="100.30" y="61.70" width="1.80" height="0.70" fill="#c9ccd6"/><rect x="103.60" y="61.60" width="1.60" height="1.00" fill="#111" rx="0.3"/><rect x="105.80" y="61.70" width="2.80" height="0.70" fill="#c9ccd6"/><rect x="111.00" y="61.60" width="1.60" height="1.00" fill="#2dba6e" rx="0.3"/><rect x="113.20" y="61.70" width="9.50" height="0.70" fill="#c9ccd6"/><rect x="123.50" y="61.60" width="1.60" height="1.00" fill="#f0564a" rx="0.3"/><rect x="125.70" y="61.70" width="9.00" height="0.70" fill="#c9ccd6"/><rect x="89.30" y="63.70" width="8.00" height="0.70" fill="#c9ccd6"/><path d="M52.70 36.10A9.7 9.7 0 0 1 57.81 54.05L55.96 51.07A6.2 6.2 0 0 0 52.70 39.60Z" fill="#2f55e8"/><path d="M57.81 54.05A9.7 9.7 0 0 1 54.48 55.33L53.84 51.89A6.2 6.2 0 0 0 55.96 51.07Z" fill="#f7b13f"/><path d="M54.48 55.33A9.7 9.7 0 0 1 49.20 54.84L50.46 51.58A6.2 6.2 0 0 0 53.84 51.89Z" fill="#111"/><path d="M49.20 54.84A9.7 9.7 0 0 1 43.04 44.90L46.53 45.23A6.2 6.2 0 0 0 50.46 51.58Z" fill="#2dba6e"/><path d="M43.04 44.90A9.7 9.7 0 0 1 47.59 37.55L49.44 40.53A6.2 6.2 0 0 0 46.53 45.23Z" fill="#f0564a"/><path d="M47.59 37.55A9.7 9.7 0 0 1 52.70 36.10L52.70 39.60A6.2 6.2 0 0 0 49.44 40.53Z" fill="#eef1f6"/><path d="M110.30 36.10A9.7 9.7 0 1 1 108.28 55.29L109.01 51.86A6.2 6.2 0 1 0 110.30 39.60Z" fill="#2f55e8"/><path d="M108.28 55.29A9.7 9.7 0 0 1 104.20 53.34L106.40 50.62A6.2 6.2 0 0 0 109.01 51.86Z" fill="#f7b13f"/><path d="M104.20 53.34A9.7 9.7 0 0 1 101.24 42.32L104.51 43.58A6.2 6.2 0 0 0 106.40 50.62Z" fill="#111"/><path d="M101.24 42.32A9.7 9.7 0 0 1 104.20 38.26L106.40 40.98A6.2 6.2 0 0 0 104.51 43.58Z" fill="#2dba6e"/><path d="M104.20 38.26A9.7 9.7 0 0 1 107.79 36.43L108.70 39.81A6.2 6.2 0 0 0 106.40 40.98Z" fill="#f0564a"/><path d="M107.79 36.43A9.7 9.7 0 0 1 110.30 36.10L110.30 39.60A6.2 6.2 0 0 0 108.70 39.81Z" fill="#eef1f6"/><rect x="25.10" y="69.50" width="84.80" height="21.00" fill="#fff" rx="0.6"/><rect x="111.70" y="69.50" width="26.60" height="21.00" fill="#fff" rx="0.6"/><rect x="26.80" y="71.40" width="19.00" height="0.90" fill="#5b6070"/><rect x="25.10" y="74.50" width="84.80" height="3.30" fill="#eef0f6"/><rect x="26.50" y="75.70" width="1.50" height="0.90" fill="#5b6070"/><rect x="33.00" y="75.70" width="4.00" height="0.90" fill="#5b6070"/><rect x="44.50" y="75.70" width="15.00" height="0.90" fill="#5b6070"/><rect x="93.50" y="75.70" width="2.50" height="0.90" fill="#5b6070"/><rect x="101.00" y="75.70" width="7.50" height="0.90" fill="#5b6070"/><rect x="26.50" y="80.40" width="3.00" height="0.80" fill="#c9ccd6"/><rect x="33.00" y="80.20" width="4.60" height="1.20" fill="#c9ccd6" rx="0.3"/><rect x="44.50" y="79.50" width="2.80" height="2.80" fill="#fff"/><rect x="44.5" y="79.70" width="2.2" height="2.2" fill="none" stroke="#c9ccd6" stroke-width=".3"/><rect x="49.00" y="80.40" width="32.00" height="0.80" fill="#c9ccd6"/><rect x="93.50" y="80.40" width="4.50" height="0.80" fill="#5b6070"/><rect x="101.00" y="80.40" width="5.00" height="0.80" fill="#4a6cf0"/><rect x="26.50" y="85.60" width="3.00" height="0.80" fill="#c9ccd6"/><rect x="33.00" y="85.40" width="4.60" height="1.20" fill="#6f7bea" rx="0.3"/><rect x="44.50" y="84.70" width="2.80" height="2.80" fill="#fff"/><rect x="44.5" y="84.90" width="2.2" height="2.2" fill="none" stroke="#c9ccd6" stroke-width=".3"/><rect x="49.00" y="85.60" width="25.00" height="0.80" fill="#c9ccd6"/><rect x="93.50" y="85.60" width="4.50" height="0.80" fill="#5b6070"/><rect x="101.00" y="85.60" width="7.50" height="0.80" fill="#4a6cf0"/><rect x="113.30" y="71.40" width="15.00" height="0.90" fill="#5b6070"/><rect x="119.00" y="75.60" width="10.00" height="0.70" fill="#c9ccd6"/><rect x="121.00" y="77.40" width="6.00" height="1.00" fill="#5b6070"/><rect x="113.20" y="81.80" width="12.20" height="1.60" fill="#a9b3ee"/><rect x="125.40" y="81.80" width="8.60" height="1.60" fill="#f7d3a0"/><rect x="134.00" y="81.80" width="2.20" height="1.60" fill="#8a8d96"/><rect x="113.30" y="86.20" width="1.00" height="1.00" fill="#6f7bea"/><rect x="115.20" y="86.30" width="7.00" height="0.70" fill="#c9ccd6"/><rect x="132.00" y="86.30" width="4.00" height="0.70" fill="#c9ccd6"/><rect x="138.60" y="33.00" width="2.40" height="11.50" fill="#8fd0c8" rx="0.8"/></g><rect x=".5" y=".5" width="141.2" height="88.6" rx="3.500" fill="none" stroke="#7d93ee"/></svg>
<svg class="b" style="left:1118px;top:709.8px;" width="142.2" height="89.6" viewBox="0 0 142.2 89.6"><defs><clipPath id="tc8"><rect x=".5" y=".5" width="141.2" height="88.6" rx="3.500"/></clipPath></defs><g clip-path="url(#tc8)"><rect x="0.00" y="0.00" width="142.20" height="89.60" fill="#15171c"/><rect x="0.00" y="0.00" width="22.60" height="89.60" fill="#15171c"/><rect x="4.20" y="3.00" width="2.20" height="2.60" fill="#3f6df0" rx="0.6"/><rect x="7.20" y="3.20" width="11.00" height="2.20" fill="#fff" rx="0.4"/><rect x="2.20" y="9.00" width="3.00" height="0.80" fill="rgba(255,255,255,.72)"/><rect x="2.20" y="12.35" width="1.50" height="1.30" fill="#fff" rx="0.3"/><rect x="4.40" y="12.40" width="5.50" height="1.10" fill="#fff"/><rect x="2.20" y="16.65" width="1.50" height="1.30" fill="rgba(255,255,255,.72)" rx="0.3"/><rect x="4.40" y="16.70" width="6.50" height="1.10" fill="rgba(255,255,255,.72)"/><rect x="2.20" y="20.95" width="1.50" height="1.30" fill="rgba(255,255,255,.72)" rx="0.3"/><rect x="4.40" y="21.00" width="6.80" height="1.10" fill="rgba(255,255,255,.72)"/><rect x="2.20" y="25.25" width="1.50" height="1.30" fill="rgba(255,255,255,.72)" rx="0.3"/><rect x="4.40" y="25.30" width="4.60" height="1.10" fill="rgba(255,255,255,.72)"/><rect x="2.20" y="29.55" width="1.50" height="1.30" fill="rgba(255,255,255,.72)" rx="0.3"/><rect x="4.40" y="29.60" width="7.60" height="1.10" fill="rgba(255,255,255,.72)"/><rect x="2.20" y="33.85" width="1.50" height="1.30" fill="rgba(255,255,255,.72)" rx="0.3"/><rect x="4.40" y="33.90" width="5.20" height="1.10" fill="rgba(255,255,255,.72)"/><rect x="2.20" y="38.15" width="1.50" height="1.30" fill="rgba(255,255,255,.72)" rx="0.3"/><rect x="4.40" y="38.20" width="6.20" height="1.10" fill="rgba(255,255,255,.72)"/><rect x="2.20" y="42.45" width="1.50" height="1.30" fill="rgba(255,255,255,.72)" rx="0.3"/><rect x="4.40" y="42.50" width="5.60" height="1.10" fill="rgba(255,255,255,.72)"/><rect x="2.20" y="46.25" width="1.50" height="1.30" fill="rgba(255,255,255,.72)" rx="0.3"/><rect x="4.40" y="46.30" width="10.50" height="1.10" fill="rgba(255,255,255,.72)"/><rect x="1.20" y="11.50" width="17.00" height="2.90" fill="rgba(255,255,255,.10)" rx="0.6"/><rect x="22.60" y="0.00" width="119.60" height="7.20" fill="#1c1e24"/><rect x="25.80" y="3.30" width="2.20" height="0.90" fill="#eef0f3"/><rect x="30.00" y="3.30" width="1.00" height="1.00" fill="#7d828e"/><rect x="31.80" y="3.40" width="6.00" height="0.80" fill="#7d828e"/><rect x="106.20" y="3.10" width="1.30" height="1.30" fill="#eef0f3" rx="0.4"/><rect x="110.60" y="3.10" width="1.30" height="1.30" fill="#eef0f3" rx="0.4"/><rect x="115.00" y="3.10" width="1.30" height="1.30" fill="#eef0f3" rx="0.4"/><rect x="119.20" y="3.10" width="1.30" height="1.30" fill="#eef0f3" rx="0.4"/><circle cx="126.2" cy="3.700" r="1.600" fill="#e8e8e8"/><rect x="129.00" y="2.60" width="7.00" height="0.90" fill="#eef0f3"/><rect x="129.00" y="4.20" width="6.00" height="0.80" fill="#7d828e"/><rect x="25.10" y="9.50" width="5.00" height="1.10" fill="#eef0f3"/><rect x="119.60" y="9.50" width="16.50" height="1.00" fill="#7d828e"/><rect x="25.10" y="13.60" width="26.60" height="12.20" fill="#1b1d23" rx="0.6"/><rect x="25.10" y="24.90" width="26.60" height="0.90" fill="#3a3d45"/><rect x="27.10" y="15.70" width="9.50" height="0.80" fill="#7d828e"/><rect x="27.10" y="18.30" width="2.20" height="1.30" fill="#eef0f3"/><rect x="27.10" y="21.80" width="3.60" height="1.00" fill="#2dba6e"/><rect x="31.30" y="21.90" width="8.50" height="0.80" fill="#7d828e"/><rect x="45.50" y="15.00" width="4.20" height="4.20" fill="#33363e" rx="0.5"/><rect x="54.00" y="13.60" width="26.60" height="12.20" fill="#1b1d23" rx="0.6"/><rect x="54.00" y="24.90" width="26.60" height="0.90" fill="#1f8a5f"/><rect x="56.00" y="15.70" width="9.50" height="0.80" fill="#7d828e"/><rect x="56.00" y="18.30" width="2.20" height="1.30" fill="#eef0f3"/><rect x="56.00" y="21.80" width="3.60" height="1.00" fill="#2dba6e"/><rect x="60.20" y="21.90" width="8.50" height="0.80" fill="#7d828e"/><rect x="74.40" y="15.00" width="4.20" height="4.20" fill="#1d4a3a" rx="0.5"/><rect x="82.80" y="13.60" width="26.60" height="12.20" fill="#1b1d23" rx="0.6"/><rect x="82.80" y="24.90" width="26.60" height="0.90" fill="#2f49c8"/><rect x="84.80" y="15.70" width="9.50" height="0.80" fill="#7d828e"/><rect x="84.80" y="18.30" width="2.20" height="1.30" fill="#eef0f3"/><rect x="84.80" y="21.80" width="3.60" height="1.00" fill="#2dba6e"/><rect x="89.00" y="21.90" width="8.50" height="0.80" fill="#7d828e"/><rect x="103.20" y="15.00" width="4.20" height="4.20" fill="#27336e" rx="0.5"/><rect x="111.70" y="13.60" width="26.60" height="12.20" fill="#1b1d23" rx="0.6"/><rect x="111.70" y="24.90" width="26.60" height="0.90" fill="#1f8a5f"/><rect x="113.70" y="15.70" width="9.50" height="0.80" fill="#7d828e"/><rect x="113.70" y="18.30" width="2.20" height="1.30" fill="#eef0f3"/><rect x="113.70" y="21.80" width="3.60" height="1.00" fill="#2dba6e"/><rect x="117.90" y="21.90" width="8.50" height="0.80" fill="#7d828e"/><rect x="132.10" y="15.00" width="4.20" height="4.20" fill="#1d4a3a" rx="0.5"/><rect x="25.10" y="27.70" width="55.20" height="40.30" fill="#1b1d23" rx="0.6"/><rect x="26.70" y="29.70" width="11.50" height="0.90" fill="#eef0f3"/><rect x="35.70" y="34.30" width="8.00" height="0.70" fill="#7d828e"/><rect x="37.70" y="35.60" width="4.00" height="0.70" fill="#7d828e"/><rect x="31.70" y="37.80" width="9.00" height="0.70" fill="#7d828e"/><rect x="33.95" y="39.10" width="4.50" height="0.70" fill="#7d828e"/><rect x="30.20" y="48.00" width="10.00" height="0.70" fill="#7d828e"/><rect x="32.70" y="49.30" width="5.00" height="0.70" fill="#7d828e"/><rect x="39.20" y="53.10" width="5.00" height="0.70" fill="#7d828e"/><rect x="40.45" y="54.40" width="2.50" height="0.70" fill="#7d828e"/><rect x="44.70" y="56.40" width="3.50" height="0.70" fill="#7d828e"/><rect x="45.58" y="57.70" width="1.75" height="0.70" fill="#7d828e"/><rect x="66.20" y="45.00" width="7.50" height="0.70" fill="#7d828e"/><rect x="68.08" y="46.30" width="3.75" height="0.70" fill="#7d828e"/><rect x="29.70" y="61.60" width="1.60" height="1.00" fill="#3a63f0" rx="0.3"/><rect x="31.90" y="61.70" width="6.50" height="0.70" fill="#7d828e"/><rect x="40.50" y="61.60" width="1.60" height="1.00" fill="#f7b13f" rx="0.3"/><rect x="42.70" y="61.70" width="1.80" height="0.70" fill="#7d828e"/><rect x="46.00" y="61.60" width="1.60" height="1.00" fill="#2a2d35" rx="0.3"/><rect x="48.20" y="61.70" width="2.80" height="0.70" fill="#7d828e"/><rect x="53.40" y="61.60" width="1.60" height="1.00" fill="#2dba6e" rx="0.3"/><rect x="55.60" y="61.70" width="9.50" height="0.70" fill="#7d828e"/><rect x="65.90" y="61.60" width="1.60" height="1.00" fill="#f0564a" rx="0.3"/><rect x="68.10" y="61.70" width="9.00" height="0.70" fill="#7d828e"/><rect x="31.70" y="63.70" width="8.00" height="0.70" fill="#7d828e"/><rect x="82.80" y="27.70" width="55.20" height="40.30" fill="#1b1d23" rx="0.6"/><rect x="84.40" y="29.70" width="11.50" height="0.90" fill="#eef0f3"/><rect x="93.30" y="34.30" width="8.00" height="0.70" fill="#7d828e"/><rect x="95.30" y="35.60" width="4.00" height="0.70" fill="#7d828e"/><rect x="89.30" y="37.80" width="9.00" height="0.70" fill="#7d828e"/><rect x="91.55" y="39.10" width="4.50" height="0.70" fill="#7d828e"/><rect x="87.80" y="48.00" width="10.00" height="0.70" fill="#7d828e"/><rect x="90.30" y="49.30" width="5.00" height="0.70" fill="#7d828e"/><rect x="96.80" y="53.10" width="5.00" height="0.70" fill="#7d828e"/><rect x="98.05" y="54.40" width="2.50" height="0.70" fill="#7d828e"/><rect x="102.30" y="56.40" width="3.50" height="0.70" fill="#7d828e"/><rect x="103.17" y="57.70" width="1.75" height="0.70" fill="#7d828e"/><rect x="123.80" y="45.00" width="7.50" height="0.70" fill="#7d828e"/><rect x="125.67" y="46.30" width="3.75" height="0.70" fill="#7d828e"/><rect x="87.30" y="61.60" width="1.60" height="1.00" fill="#3a63f0" rx="0.3"/><rect x="89.50" y="61.70" width="6.50" height="0.70" fill="#7d828e"/><rect x="98.10" y="61.60" width="1.60" height="1.00" fill="#f7b13f" rx="0.3"/><rect x="100.30" y="61.70" width="1.80" height="0.70" fill="#7d828e"/><rect x="103.60" y="61.60" width="1.60" height="1.00" fill="#2a2d35" rx="0.3"/><rect x="105.80" y="61.70" width="2.80" height="0.70" fill="#7d828e"/><rect x="111.00" y="61.60" width="1.60" height="1.00" fill="#2dba6e" rx="0.3"/><rect x="113.20" y="61.70" width="9.50" height="0.70" fill="#7d828e"/><rect x="123.50" y="61.60" width="1.60" height="1.00" fill="#f0564a" rx="0.3"/><rect x="125.70" y="61.70" width="9.00" height="0.70" fill="#7d828e"/><rect x="89.30" y="63.70" width="8.00" height="0.70" fill="#7d828e"/><path d="M52.70 36.10A9.7 9.7 0 0 1 57.81 54.05L55.96 51.07A6.2 6.2 0 0 0 52.70 39.60Z" fill="#3a63f0"/><path d="M57.81 54.05A9.7 9.7 0 0 1 54.48 55.33L53.84 51.89A6.2 6.2 0 0 0 55.96 51.07Z" fill="#f7b13f"/><path d="M54.48 55.33A9.7 9.7 0 0 1 49.20 54.84L50.46 51.58A6.2 6.2 0 0 0 53.84 51.89Z" fill="#2a2d35"/><path d="M49.20 54.84A9.7 9.7 0 0 1 43.04 44.90L46.53 45.23A6.2 6.2 0 0 0 50.46 51.58Z" fill="#2dba6e"/><path d="M43.04 44.90A9.7 9.7 0 0 1 47.59 37.55L49.44 40.53A6.2 6.2 0 0 0 46.53 45.23Z" fill="#f0564a"/><path d="M47.59 37.55A9.7 9.7 0 0 1 52.70 36.10L52.70 39.60A6.2 6.2 0 0 0 49.44 40.53Z" fill="#5c616b"/><path d="M110.30 36.10A9.7 9.7 0 1 1 108.28 55.29L109.01 51.86A6.2 6.2 0 1 0 110.30 39.60Z" fill="#3a63f0"/><path d="M108.28 55.29A9.7 9.7 0 0 1 104.20 53.34L106.40 50.62A6.2 6.2 0 0 0 109.01 51.86Z" fill="#f7b13f"/><path d="M104.20 53.34A9.7 9.7 0 0 1 101.24 42.32L104.51 43.58A6.2 6.2 0 0 0 106.40 50.62Z" fill="#8a8f99"/><path d="M101.24 42.32A9.7 9.7 0 0 1 104.20 38.26L106.40 40.98A6.2 6.2 0 0 0 104.51 43.58Z" fill="#2dba6e"/><path d="M104.20 38.26A9.7 9.7 0 0 1 107.79 36.43L108.70 39.81A6.2 6.2 0 0 0 106.40 40.98Z" fill="#f0564a"/><path d="M107.79 36.43A9.7 9.7 0 0 1 110.30 36.10L110.30 39.60A6.2 6.2 0 0 0 108.70 39.81Z" fill="#5c616b"/><rect x="25.10" y="69.50" width="84.80" height="21.00" fill="#1b1d23" rx="0.6"/><rect x="111.70" y="69.50" width="26.60" height="21.00" fill="#1b1d23" rx="0.6"/><rect x="26.80" y="71.40" width="19.00" height="0.90" fill="#eef0f3"/><rect x="25.10" y="74.50" width="84.80" height="3.30" fill="#2a2d35"/><rect x="26.50" y="75.70" width="1.50" height="0.90" fill="#eef0f3"/><rect x="33.00" y="75.70" width="4.00" height="0.90" fill="#eef0f3"/><rect x="44.50" y="75.70" width="15.00" height="0.90" fill="#eef0f3"/><rect x="93.50" y="75.70" width="2.50" height="0.90" fill="#eef0f3"/><rect x="101.00" y="75.70" width="7.50" height="0.90" fill="#eef0f3"/><rect x="26.50" y="80.40" width="3.00" height="0.80" fill="#7d828e"/><rect x="33.00" y="80.20" width="4.60" height="1.20" fill="#7d828e" rx="0.3"/><rect x="44.50" y="79.50" width="2.80" height="2.80" fill="#fff"/><rect x="44.5" y="79.70" width="2.2" height="2.2" fill="none" stroke="#7d828e" stroke-width=".3"/><rect x="49.00" y="80.40" width="32.00" height="0.80" fill="#7d828e"/><rect x="93.50" y="80.40" width="4.50" height="0.80" fill="#eef0f3"/><rect x="101.00" y="80.40" width="5.00" height="0.80" fill="#4a6cf0"/><rect x="26.50" y="85.60" width="3.00" height="0.80" fill="#7d828e"/><rect x="33.00" y="85.40" width="4.60" height="1.20" fill="#6f7bea" rx="0.3"/><rect x="44.50" y="84.70" width="2.80" height="2.80" fill="#fff"/><rect x="44.5" y="84.90" width="2.2" height="2.2" fill="none" stroke="#7d828e" stroke-width=".3"/><rect x="49.00" y="85.60" width="25.00" height="0.80" fill="#7d828e"/><rect x="93.50" y="85.60" width="4.50" height="0.80" fill="#eef0f3"/><rect x="101.00" y="85.60" width="7.50" height="0.80" fill="#4a6cf0"/><rect x="113.30" y="71.40" width="15.00" height="0.90" fill="#eef0f3"/><rect x="119.00" y="75.60" width="10.00" height="0.70" fill="#7d828e"/><rect x="121.00" y="77.40" width="6.00" height="1.00" fill="#eef0f3"/><rect x="113.20" y="81.80" width="12.20" height="1.60" fill="#3a57e0"/><rect x="125.40" y="81.80" width="8.60" height="1.60" fill="#f0a93b"/><rect x="134.00" y="81.80" width="2.20" height="1.60" fill="#8a8d96"/><rect x="113.30" y="86.20" width="1.00" height="1.00" fill="#6f7bea"/><rect x="115.20" y="86.30" width="7.00" height="0.70" fill="#7d828e"/><rect x="132.00" y="86.30" width="4.00" height="0.70" fill="#7d828e"/><rect x="138.60" y="33.00" width="2.40" height="11.50" fill="#2f8f86" rx="0.8"/></g><rect x=".5" y=".5" width="141.2" height="88.6" rx="3.500" fill="none" stroke="#e8ebf6"/></svg>
<svg class="b" style="left:1241.5px;top:414.8px;" width="11" height="11" viewBox="0 0 12 12"><circle cx="6" cy="6" r="6" fill="#3266e3"/><path d="M3.300 6.200L5.200 8L8.800 4.300" fill="none" stroke="#fff" stroke-width="1.300" stroke-linecap="round" stroke-linejoin="round"/></svg>
<svg class="b" style="left:1085.5px;top:716.5px;" width="11" height="11" viewBox="0 0 12 12"><circle cx="6" cy="6" r="6" fill="#3266e3"/><path d="M3.300 6.200L5.200 8L8.800 4.300" fill="none" stroke="#fff" stroke-width="1.300" stroke-linecap="round" stroke-linejoin="round"/></svg>
<span id="t81" class="t" style="left:1012.60px;top:389.97px;font-size:10.2px;line-height:10.2px;color:#16191d;font-weight:700;transform:scaleX(1.1325);transform-origin:0 0;">Implicit</span>
<span id="t82" class="t" style="left:1166.90px;top:389.97px;font-size:10.2px;line-height:10.2px;color:#16191d;font-weight:700;transform:scaleX(1.1060);transform-origin:0 0;">Material</span>
<span id="t83" class="t" style="left:1014.50px;top:506.47px;font-size:10.2px;line-height:10.2px;color:#16191d;font-weight:700;transform:scaleX(1.0710);transform-origin:0 0;">Creativ</span>
<span id="t84" class="t" style="left:1167.00px;top:506.47px;font-size:10.2px;line-height:10.2px;color:#16191d;font-weight:700;letter-spacing:0.037px;transform:scaleX(1.1400);transform-origin:0 0;">Minimal</span>
<span id="t85" class="t" style="left:1013.00px;top:622.97px;font-size:10.2px;line-height:10.2px;color:#16191d;font-weight:700;transform:scaleX(1.0735);transform-origin:0 0;">Modern</span>
<span id="t86" class="t" style="left:1156.50px;top:622.97px;font-size:10.2px;line-height:10.2px;color:#16191d;font-weight:700;transform:scaleX(1.1082);transform-origin:0 0;">Interacțiune</span>
</div>
</body></html>
